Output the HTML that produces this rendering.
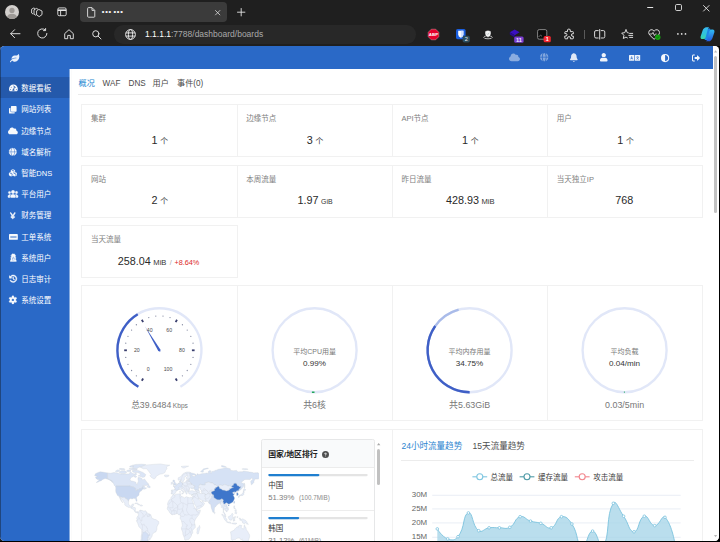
<!DOCTYPE html><html lang="zh-CN"><head><meta charset="utf-8"><title>dashboard</title>
<style>html,body{margin:0;padding:0}body{width:720px;height:542px;overflow:hidden;position:relative;background:#1f1f1f;font-family:"Liberation Sans","Noto Sans CJK SC",sans-serif;}div,svg{box-sizing:border-box}svg{display:block;overflow:visible}.c{position:absolute;border:1px solid #f1f1f1;background:#fff}</style></head><body>
<svg style="position:absolute;left:4.6px;top:4.9px" width="14" height="14" viewBox="0 0 14 14"><defs><clipPath id="av"><circle cx="7" cy="7" r="7"/></clipPath></defs><circle cx="7" cy="7" r="7" fill="#d3d0cd"/><g clip-path="url(#av)" fill="#9d9995"><circle cx="7" cy="5.4" r="2.6"/><ellipse cx="7" cy="12.6" rx="5" ry="3.9"/></g></svg>
<svg style="position:absolute;left:30.6px;top:6.6px" width="12" height="11" viewBox="0 0 12 11" fill="none" stroke="#e4e4e4" stroke-width="0.9" stroke-linejoin="round" stroke-linecap="round"><path d="M8.2 2.6 L11 4 V7.6 L8.2 9.6 L5.6 8 V4.2 Z"/><path d="M6.6 2 L5.4 1.4 L3 2.8 V7 L4.6 8.2"/><path d="M3.6 1.4 L2.8 1 L0.6 2.2 V6 L2 7"/></svg>
<svg style="position:absolute;left:57px;top:7px" width="10" height="10" viewBox="0 0 10 10" fill="none" stroke="#e4e4e4" stroke-width="0.9"><rect x="0.8" y="0.9" width="8.4" height="7.8" rx="1.4"/><path d="M0.8 3.2 H9.2" stroke-width="1.6"/><path d="M3.6 3.2 V8.7"/></svg>
<div style="position:absolute;left:79.80px;top:1.60px;width:147.40px;height:20.90px;background:#3b3b3b;border-radius:4px"></div>
<svg style="position:absolute;left:86.8px;top:6.6px" width="8.4" height="10.8" viewBox="0 0 8.4 10.8" fill="none" stroke="#e4e4e4" stroke-width="0.9" stroke-linejoin="round"><path d="M1.6 0.6 H5 L7.8 3.4 V9.4 Q7.8 10.2 7 10.2 H1.6 Q0.6 10.2 0.6 9.4 V1.6 Q0.6 0.6 1.6 0.6 Z"/><path d="M5 0.8 V3.4 H7.6"/></svg>
<div style="position:absolute;top:2.35px;font-size:13px;line-height:19.5px;color:#f0f0f0;white-space:nowrap;font-weight:bold;left:101.30px;letter-spacing:-0.95px;">···<span style="display:inline-block;width:1.5px"></span>···</div>
<svg style="position:absolute;left:215.1px;top:9.6px" width="5.4" height="5.4" viewBox="0 0 6.4 6.4" stroke="#e4e4e4" stroke-width="0.9" stroke-linecap="round"><path d="M0.6 0.6 L5.8 5.8 M5.8 0.6 L0.6 5.8"/></svg>
<svg style="position:absolute;left:236.6px;top:7.8px" width="8.4" height="8.4" viewBox="0 0 8.4 8.4" stroke="#e4e4e4" stroke-width="0.9" stroke-linecap="round"><path d="M4.2 0.5 V7.9 M0.5 4.2 H7.9"/></svg>
<svg style="position:absolute;left:646.8px;top:7.4px" width="6.4" height="1.2" viewBox="0 0 6.4 1.2"><rect width="6.4" height="1.1" rx="0.5" fill="#e4e4e4"/></svg>
<svg style="position:absolute;left:674.8px;top:4.4px" width="7" height="7" viewBox="0 0 7 7" fill="none" stroke="#e4e4e4" stroke-width="0.9"><rect x="0.5" y="0.5" width="6" height="6" rx="1.2"/></svg>
<svg style="position:absolute;left:703.3px;top:4.8px" width="6.6" height="6.6" viewBox="0 0 6.6 6.6" stroke="#e4e4e4" stroke-width="0.9" stroke-linecap="round"><path d="M0.5 0.5 L6.1 6.1 M6.1 0.5 L0.5 6.1"/></svg>
<svg style="position:absolute;left:10px;top:29.0px" width="10.6" height="9.4" viewBox="0 0 10.6 9.4" fill="none" stroke="#e4e4e4" stroke-width="0.95" stroke-linecap="round" stroke-linejoin="round"><path d="M10 4.7 H0.8 M4.6 0.7 L0.7 4.7 L4.6 8.7"/></svg>
<svg style="position:absolute;left:37.3px;top:28.4px" width="10.8" height="10.8" viewBox="0 0 10.8 10.8" fill="none" stroke="#e4e4e4" stroke-width="0.95" stroke-linecap="round" stroke-linejoin="round"><path d="M9.9 5.4 A4.6 4.6 0 1 1 8.2 1.85"/><path d="M8.6 0.5 V2.6 H6.5" /></svg>
<svg style="position:absolute;left:64.4px;top:28.6px" width="10" height="10.4" viewBox="0 0 10 10.4" fill="none" stroke="#e4e4e4" stroke-width="0.95" stroke-linejoin="round"><path d="M0.7 4.6 L5 0.7 L9.3 4.6 V9.7 H6.3 V6.4 H3.7 V9.7 H0.7 Z"/></svg>
<svg style="position:absolute;left:92px;top:29.6px" width="9.6" height="9.6" viewBox="0 0 9.6 9.6" fill="none" stroke="#e4e4e4" stroke-width="0.95" stroke-linecap="round"><circle cx="3.8" cy="3.8" r="3.1"/><path d="M6.1 6.1 L9 9"/></svg>
<div style="position:absolute;left:114.40px;top:25.30px;width:302.00px;height:18.40px;background:#282828;border-radius:9.2px"></div>
<svg style="position:absolute;left:124.6px;top:28.6px" width="11" height="11" viewBox="0 0 11 11" fill="none" stroke="#f2f2f2" stroke-width="0.9"><circle cx="5.5" cy="5.5" r="4.9"/><ellipse cx="5.5" cy="5.5" rx="2.1" ry="4.9"/><path d="M0.9 3.9 H10.1 M0.9 7.1 H10.1"/></svg>
<div style="position:absolute;top:28.42px;font-size:8.5px;line-height:12.75px;color:#a8a8a8;white-space:nowrap;left:145.00px;"><span style="color:#fff">1.1.1.1</span>:7788/dashboard/boards</div>
<svg style="position:absolute;left:428px;top:28.7px" width="11" height="11" viewBox="0 0 11 11"><path d="M3.3 0.2 H7.7 L10.8 3.3 V7.7 L7.7 10.8 H3.3 L0.2 7.7 V3.3 Z" fill="#e4002b" stroke="#f5b6c0" stroke-width="0.4"/><text x="5.5" y="7.2" font-size="4.4" font-weight="bold" fill="#fff" text-anchor="middle" font-family="Liberation Sans,sans-serif">ABP</text></svg>
<svg style="position:absolute;left:455.6px;top:29px" width="16" height="15" viewBox="0 0 16 15"><rect x="0" y="0" width="9.6" height="10.2" rx="1.6" fill="#1a5fe0"/><path d="M2.2 1.8 H7.4 V5.4 Q7.4 7.6 4.8 8.8 Q2.2 7.6 2.2 5.4 Z" fill="#fff"/><path d="M4.8 1.8 H7.4 V5.4 Q7.4 7.6 4.8 8.8 Z" fill="#cfe0ff"/><rect x="6.6" y="6.8" width="7.2" height="6.6" rx="1.6" fill="#2b4c5c"/><text x="10.2" y="12.1" font-size="5.6" fill="#e8f0f4" text-anchor="middle" font-family="Liberation Sans,sans-serif">2</text></svg>
<svg style="position:absolute;left:482px;top:28.8px" width="12" height="12" viewBox="0 0 12 12"><ellipse cx="6" cy="8.3" rx="4.3" ry="1.5" fill="none" stroke="#d8d8d8" stroke-width="0.8"/><path d="M3 2.2 L6 1.2 L9 2.2 V5 Q9 7.4 6 8.4 Q3 7.4 3 5 Z" fill="#f4f4f4" stroke="#1f1f1f" stroke-width="0.5"/><path d="M4.9 4.6 L5.8 5.5 L7.2 3.8" fill="none" stroke="#9aa" stroke-width="0.6"/></svg>
<svg style="position:absolute;left:509px;top:28.6px" width="16" height="15" viewBox="0 0 16 15"><path d="M5.7 0.6 L10.6 3.3 L5.7 6.2 L0.8 3.3 Z" fill="#3a0fc0"/><path d="M0.8 3.3 L5.7 6.2 V8.4 L0.8 5.4 Z" fill="#2a0a94"/><rect x="5.2" y="7.4" width="9.4" height="6.4" rx="1.5" fill="#7a3fd2"/><text x="9.9" y="12.6" font-size="5.6" font-weight="bold" fill="#f0e8ff" text-anchor="middle" font-family="Liberation Sans,sans-serif">11</text></svg>
<svg style="position:absolute;left:537px;top:29px" width="15" height="14" viewBox="0 0 15 14"><rect x="0.6" y="0.6" width="9.2" height="9.6" rx="1.6" fill="#0c0c0c" stroke="#8e8e8e" stroke-width="0.9"/><path d="M1.6 8 L3.6 6 L5 7.4" fill="none" stroke="#8e8e8e" stroke-width="0.7"/><rect x="6.6" y="7" width="7.2" height="6.2" rx="1.5" fill="#f0252d"/><text x="10.2" y="12" font-size="5.4" font-weight="bold" fill="#fff" text-anchor="middle" font-family="Liberation Sans,sans-serif">1</text></svg>
<svg style="position:absolute;left:564.4px;top:28.4px" width="11" height="11.6" viewBox="0 0 11 11.6" fill="none" stroke="#e4e4e4" stroke-width="0.95" stroke-linejoin="round"><path d="M1.6 3.6 H3.5 Q2.9 1 4.9 1 Q6.9 1 6.3 3.6 H8.6 Q9.4 3.6 9.4 4.4 V5.8 Q7.4 5.2 7.4 7 Q7.4 8.8 9.4 8.2 V10 Q9.4 10.8 8.6 10.8 H6.4 Q7 8.6 5 8.6 Q3 8.6 3.6 10.8 H1.6 Q0.8 10.8 0.8 10 V8 Q3 8.6 3 6.8 Q3 5 0.8 5.6 V4.4 Q0.8 3.6 1.6 3.6 Z"/></svg>
<div style="position:absolute;left:584.40px;top:29.60px;width:0.80px;height:9.60px;background:#5a5a5a"></div>
<svg style="position:absolute;left:594px;top:28.8px" width="11.4" height="10.6" viewBox="0 0 11.4 10.6" fill="none" stroke="#e4e4e4" stroke-width="0.95" stroke-linecap="round"><path d="M4.2 1.6 H2 Q0.6 1.6 0.6 3 V7.6 Q0.6 9 2 9 H4.2 M7.2 1.6 H9.4 Q10.8 1.6 10.8 3 V7.6 Q10.8 9 9.4 9 H7.2 M5.7 0.5 V10.1"/></svg>
<svg style="position:absolute;left:621.4px;top:28.8px" width="12.4" height="11" viewBox="0 0 12.4 11" fill="none" stroke="#e4e4e4" stroke-width="0.95" stroke-linejoin="round" stroke-linecap="round"><path d="M5 0.8 L6.3 3.7 L7.4 3.9 M5 0.8 L3.7 3.7 L0.7 4.1 L2.9 6.3 L2.3 9.5 L5 8.1 L6.4 8.9"/><path d="M8.6 4.4 H11.7 M7.8 6.4 H11.7 M8.6 8.4 H11.7"/></svg>
<svg style="position:absolute;left:648.4px;top:28.9px" width="13" height="12" viewBox="0 0 13 12"><path d="M6.1 2.2 Q4.9 0.5 3.1 0.7 Q0.8 1.1 0.7 3.5 Q0.7 5 2.1 6.5 L6.1 10.3 L10.1 6.5 Q11.5 5 11.5 3.5 Q11.4 1.1 9.1 0.7 Q7.3 0.5 6.1 2.2 Z" fill="none" stroke="#e4e4e4" stroke-width="0.95" stroke-linejoin="round"/><path d="M1.6 5 H4 L5 3.4 L6.4 6.6 L7.3 5 H8.6" fill="none" stroke="#e4e4e4" stroke-width="0.8" stroke-linejoin="round"/><circle cx="9.8" cy="8.3" r="2.7" fill="#13a10e"/><path d="M8.6 8.3 L9.5 9.2 L11 7.5" fill="none" stroke="#0b5a08" stroke-width="0.7"/></svg>
<svg style="position:absolute;left:676.6px;top:33.2px" width="9.4" height="1.8" viewBox="0 0 9.4 1.8" fill="#e4e4e4"><circle cx="0.9" cy="0.9" r="0.85"/><circle cx="4.7" cy="0.9" r="0.85"/><circle cx="8.5" cy="0.9" r="0.85"/></svg>
<svg style="position:absolute;left:700.2px;top:27px" width="15" height="14.6" viewBox="0 0 15 14.6"><defs><linearGradient id="cp1" x1="0" y1="0" x2="0" y2="1"><stop offset="0" stop-color="#36b9f2"/><stop offset="0.55" stop-color="#30c4dc"/><stop offset="1" stop-color="#3ad6a4"/></linearGradient><linearGradient id="cp2" x1="0" y1="0" x2="0" y2="1"><stop offset="0" stop-color="#31bdf2"/><stop offset="1" stop-color="#2458e0"/></linearGradient></defs><path d="M5 1.4 H10 L11 3.6 L9.8 13 H5 L4 11 Z" fill="#1f86e6"/><path d="M4.2 1.2 Q5 0.3 6.4 0.3 H9.2 Q8.1 1 7.7 2.4 L5.6 10.4 Q5.1 12 3.4 12 H2.4 Q0.2 12 0.6 9.4 L2.6 3.4 Q3.2 1.8 4.2 1.2 Z" fill="url(#cp1)"/><path d="M10.8 13.4 Q10 14.3 8.6 14.3 H5.8 Q6.9 13.6 7.3 12.2 L9.4 4.2 Q9.9 2.6 11.6 2.6 H12.6 Q14.8 2.6 14.4 5.2 L12.4 11.2 Q11.8 12.8 10.8 13.4 Z" fill="url(#cp2)"/></svg>
<div style="position:absolute;left:718.4px;top:46px;width:2px;height:496px;background:#000"></div>
<div style="position:absolute;left:0;top:540.8px;width:720px;height:2px;background:#000"></div>
<div id="page" style="position:absolute;left:0px;top:45.7px;width:718.5px;height:495.2px;border-radius:4.5px;overflow:hidden;background:#fff">
<div style="position:absolute;left:0px;top:-45.7px;width:720px;height:542px">
<div style="position:absolute;left:0.00px;top:45.00px;width:712.70px;height:23.80px;background:#2a69c7"></div>
<div style="position:absolute;left:0.00px;top:68.00px;width:69.00px;height:480.00px;background:#2a69c7"></div>
<div style="position:absolute;left:69.00px;top:68.80px;width:1.00px;height:480.00px;background:#86abe0"></div>
<div style="position:absolute;left:0.00px;top:77.40px;width:69.00px;height:20.90px;background:#2459ab"></div>
<div style="position:absolute;left:69.00px;top:77.40px;width:1.00px;height:20.90px;background:#7d9fd4"></div>
<svg style="position:absolute;left:9.93px;top:53.55px;opacity:1" width="9.34" height="8.30" viewBox="0 0 576 512"><path fill="#e9f0fb" fill-rule="evenodd" stroke="#e9f0fb" stroke-width="0" stroke-linejoin="round" d="M546.2 9.7c-5.6-12.5-21.6-13-28.3-1.2C486.9 62.4 431.4 96 368 96h-80C182 96 96 182 96 288c0 7 .8 13.7 1.5 20.5C161.3 262.8 253.4 224 384 224c8.8 0 16 7.2 16 16s-7.2 16-16 16C132.6 256 26 410.1 2.4 468c-6.6 16.3 1.2 34.900 17.5 41.600 16.400 6.800 35-1.100 41.800-17.300 1.500-3.600 20.900-47.900 71.900-90.600 32.400 43.900 94 85.800 174.900 77.200C465.500 467.500 576 326.700 576 154.300c0-50.200-10.800-102.200-29.800-144.600z"/></svg>
<svg style="position:absolute;left:508.50px;top:53.30px;opacity:0.45" width="11.00" height="8.80" viewBox="0 0 640 512"><path fill="#fff" fill-rule="evenodd" stroke="#fff" stroke-width="0" stroke-linejoin="round" d="M537.6 226.6c4.1-10.7 6.4-22.4 6.4-34.6 0-53-43-96-96-96-19.7 0-38.1 6-53.3 16.2C367 64.2 315.3 32 256 32c-88.4 0-160 71.6-160 160 0 2.700.100 5.400.200 8.100C40.200 219.800 0 273.200 0 336c0 79.500 64.500 144 144 144h368c70.700 0 128-57.300 128-128 0-61.900-44-113.600-102.400-125.400z"/></svg>
<svg style="position:absolute;left:539.60px;top:53.40px;opacity:0.42" width="8.40" height="8.40" viewBox="0 0 512 512"><path fill="#fff" fill-rule="evenodd" stroke="#fff" stroke-width="0" stroke-linejoin="round" d="M351.9 280H161c2.9 64.5 17.2 123.9 37.5 167.4 11.4 24.5 23.7 41.8 35.1 52.4 11.2 10.5 18.9 12.2 22.9 12.2s11.7-1.7 22.9-12.2c11.4-10.6 23.7-28 35.1-52.4 20.3-43.5 34.6-102.9 37.5-167.4zm-191-48h190.9c-2.8-64.5-17.1-123.9-37.4-167.4-11.4-24.4-23.7-41.8-35.1-52.4C268.1 1.7 260.4 0 256.4 0s-11.7 1.7-22.9 12.2c-11.4 10.6-23.7 28-35.1 52.4-20.3 43.5-34.6 102.9-37.5 167.4m-48 0c3.5-85.6 25.6-165.1 57.9-217.3C78.7 47.3 10.9 131.2 1.5 232zM1.5 280c9.4 100.8 77.2 184.7 169.3 217.3-32.3-52.2-54.4-131.7-57.9-217.3zm398.4 0c-3.5 85.6-25.6 165.1-57.9 217.3 92.1-32.7 159.9-116.5 169.3-217.3zm111.4-48C501.9 131.2 434.1 47.3 342 14.7c32.3 52.2 54.4 131.7 57.9 217.3z"/></svg>
<svg style="position:absolute;left:569.85px;top:53.20px;opacity:0.85" width="7.70" height="8.80" viewBox="0 0 448 512"><path fill="#fff" fill-rule="evenodd" stroke="#fff" stroke-width="0" stroke-linejoin="round" d="M224 0c-17.7 0-32 14.3-32 32v3.2C119 50 64 114.6 64 192v21.7c0 48.1-16.4 94.8-46.4 132.4l-9.8 12.2C2.7 364.6 0 372.4 0 380.5 0 400.1 15.9 416 35.5 416h376.9c19.6 0 35.5-15.9 35.5-35.5 0-8.1-2.7-15.9-7.8-22.2l-9.8-12.2c-29.9-37.6-46.3-84.3-46.3-132.4V192c0-77.4-55-142-128-156.8V32c0-17.7-14.3-32-32-32m-62 464c7.1 27.6 32.2 48 62 48s54.9-20.4 62-48z"/></svg>
<svg style="position:absolute;left:599.94px;top:53.20px;opacity:0.92" width="7.52" height="8.60" viewBox="0 0 448 512"><path fill="#fff" fill-rule="evenodd" stroke="#fff" stroke-width="0" stroke-linejoin="round" d="M224 256c70.700 0 128-57.300 128-128S294.700 0 224 0 96 57.300 96 128s57.300 128 128 128zm89.600 32h-16.700c-22.200 10.200-46.900 16-72.900 16s-50.600-5.800-72.900-16h-16.700C60.200 288 0 348.200 0 422.400V464c0 26.500 21.500 48 48 48h352c26.500 0 48-21.500 48-48v-41.600c0-74.200-60.200-134.400-134.400-134.400z"/></svg>
<svg style="position:absolute;left:629.2px;top:54.7px;opacity:.92" width="11.2" height="5.8" viewBox="0 0 11.2 5.8"><rect x="0" y="0" width="5.3" height="5.8" rx="0.5" fill="#fff"/><rect x="5.9" y="0" width="5.3" height="5.8" rx="0.5" fill="#fff"/><path d="M1.7 4.4 L2.65 1.5 L3.6 4.4 M2 3.5 H3.3" stroke="#2a69c7" stroke-width="0.6" fill="none"/><path d="M7.2 2.1 H9.9 M8.55 1.3 V2.1 M7.5 4.5 Q9 3.8 9.4 2.1 M7.8 2.8 Q8.5 4 9.9 4.5" stroke="#2a69c7" stroke-width="0.55" fill="none"/></svg>
<svg style="position:absolute;left:661.10px;top:53.50px;opacity:0.95" width="8.20" height="8.20" viewBox="0 0 512 512"><path fill="#fff" fill-rule="evenodd" stroke="#fff" stroke-width="0" stroke-linejoin="round" d="M448 256c0-106-86-192-192-192v384c106 0 192-86 192-192M0 256a256 256 0 1 1 512 0 256 256 0 1 1-512 0"/></svg>
<svg style="position:absolute;left:691.60px;top:53.60px;opacity:0.95" width="8.00" height="8.00" viewBox="0 0 512 512"><path fill="#fff" fill-rule="evenodd" stroke="#fff" stroke-width="0" stroke-linejoin="round" d="M505 273c9.4-9.4 9.4-24.6 0-33.9L361 95c-6.9-6.9-17.2-8.9-26.2-5.2S320 102.3 320 112v80H208c-26.5 0-48 21.5-48 48v32c0 26.5 21.5 48 48 48h112v80c0 9.7 5.8 18.5 14.8 22.2s19.3 1.7 26.2-5.2zM160 96c17.7 0 32-14.3 32-32s-14.3-32-32-32H96C43 32 0 75 0 128v256c0 53 43 96 96 96h64c17.7 0 32-14.3 32-32s-14.3-32-32-32H96c-17.7 0-32-14.3-32-32V128c0-17.7 14.3-32 32-32z"/></svg>
<svg style="position:absolute;left:8.78px;top:84.28px;opacity:0.96" width="8.83" height="7.85" viewBox="0 0 576 512"><path fill="#fff" fill-rule="evenodd" stroke="#fff" stroke-width="0" stroke-linejoin="round" d="M288 32C128.940 32 0 160.940 0 320c0 52.800 14.250 102.260 39.060 144.800 5.610 9.620 16.300 15.200 27.440 15.200h443c11.140 0 21.830-5.580 27.440-15.200C561.750 422.260 576 372.800 576 320c0-159.060-128.940-288-288-288zM288 96a32 32 0 1 1 0 64 32 32 0 1 1 0-64zM96 384a32 32 0 1 1 0-64 32 32 0 1 1 0 64zM144 240a32 32 0 1 1 0-64 32 32 0 1 1 0 64zM393.150 167.500L331.810 351.500C346.670 363.230 356.410 381.200 356.410 401.600c0 11.720-3.380 22.550-8.880 32H228.470c-5.500-9.450-8.880-20.280-8.880-32 0-33.940 26.500-61.430 59.900-63.590l61.340-184.010c4.170-12.560 17.730-19.450 30.360-15.170 12.570 4.190 19.350 17.790 15.160 30.370zM432 240a32 32 0 1 1 0-64 32 32 0 1 1 0 64zM480 384a32 32 0 1 1 0-64 32 32 0 1 1 0 64z"/></svg>
<div style="position:absolute;top:83.18px;font-size:7.5px;line-height:11.25px;color:#fff;white-space:nowrap;left:21.30px;">数据看板</div>
<svg style="position:absolute;left:9.40px;top:105.60px;opacity:0.96" width="7.60" height="7.60" viewBox="0 0 512 512"><path fill="#fff" fill-rule="evenodd" stroke="#fff" stroke-width="0" stroke-linejoin="round" d="M464 0c26.510 0 48 21.490 48 48v288c0 26.510-21.490 48-48 48H176c-26.510 0-48-21.490-48-48V48c0-26.510 21.490-48 48-48h288M176 416c-44.112 0-80-35.888-80-80V128H48c-26.510 0-48 21.490-48 48v288c0 26.510 21.490 48 48 48h288c26.510 0 48-21.490 48-48v-48H176z"/></svg>
<div style="position:absolute;top:104.38px;font-size:7.5px;line-height:11.25px;color:#fff;white-space:nowrap;left:21.30px;">网站列表</div>
<svg style="position:absolute;left:8.29px;top:126.68px;opacity:0.96" width="9.81" height="7.85" viewBox="0 0 640 512"><path fill="#fff" fill-rule="evenodd" stroke="#fff" stroke-width="0" stroke-linejoin="round" d="M537.6 226.6c4.1-10.7 6.4-22.4 6.4-34.6 0-53-43-96-96-96-19.7 0-38.1 6-53.3 16.2C367 64.2 315.3 32 256 32c-88.4 0-160 71.6-160 160 0 2.700.100 5.400.200 8.100C40.200 219.800 0 273.200 0 336c0 79.500 64.500 144 144 144h368c70.700 0 128-57.300 128-128 0-61.900-44-113.600-102.400-125.400z"/></svg>
<div style="position:absolute;top:125.58px;font-size:7.5px;line-height:11.25px;color:#fff;white-space:nowrap;left:21.30px;">边缘节点</div>
<svg style="position:absolute;left:9.40px;top:148.00px;opacity:0.96" width="7.60" height="7.60" viewBox="0 0 512 512"><path fill="#fff" fill-rule="evenodd" stroke="#fff" stroke-width="22" stroke-linejoin="round" d="M351.9 280H161c2.9 64.5 17.2 123.9 37.5 167.4 11.4 24.5 23.7 41.8 35.1 52.4 11.2 10.5 18.9 12.2 22.9 12.2s11.7-1.7 22.9-12.2c11.4-10.6 23.7-28 35.1-52.4 20.3-43.5 34.6-102.9 37.5-167.4zm-191-48h190.9c-2.8-64.5-17.1-123.9-37.4-167.4-11.4-24.4-23.7-41.8-35.1-52.4C268.1 1.7 260.4 0 256.4 0s-11.7 1.7-22.9 12.2c-11.4 10.6-23.7 28-35.1 52.4-20.3 43.5-34.6 102.9-37.5 167.4m-48 0c3.5-85.6 25.6-165.1 57.9-217.3C78.7 47.3 10.9 131.2 1.5 232zM1.5 280c9.4 100.8 77.2 184.7 169.3 217.3-32.3-52.2-54.4-131.7-57.9-217.3zm398.4 0c-3.5 85.6-25.6 165.1-57.9 217.3 92.1-32.7 159.9-116.5 169.3-217.3zm111.4-48C501.9 131.2 434.1 47.3 342 14.7c32.3 52.2 54.4 131.7 57.9 217.3z"/></svg>
<div style="position:absolute;top:146.78px;font-size:7.5px;line-height:11.25px;color:#fff;white-space:nowrap;left:21.30px;">域名解析</div>
<svg style="position:absolute;left:9.27px;top:169.07px;opacity:0.96" width="7.85" height="7.85" viewBox="0 0 512 512"><path fill="#fff" fill-rule="evenodd" stroke="#fff" stroke-width="14" stroke-linejoin="round" d="M488.600 250.200L392 214V105.500c0-15-9.300-28.400-23.400-33.700l-100-37.500c-8.100-3.100-17.100-3.100-25.300 0l-100 37.500c-14.100 5.300-23.400 18.700-23.400 33.700V214l-96.600 36.200C9.300 255.500 0 268.900 0 283.900V394c0 13.600 7.700 26.100 19.900 32.200l100 50c10.100 5.100 22.100 5.100 32.200 0l103.900-52 103.900 52c10.100 5.100 22.100 5.100 32.200 0l100-50c12.200-6.100 19.900-18.600 19.900-32.200V283.900c0-15-9.300-28.400-23.400-33.700zM358 214.800l-85 31.900v-68.200l85-37v73.300zM154 104.100l102-38.200 102 38.200v.6l-102 41.400-102-41.400v-.6zm84 291.100l-85 42.500v-79.100l85-38.800v75.400zm0-112l-102 41.400-102-41.400v-.6l102-38.200 102 38.200v.6zm240 112l-85 42.500v-79.100l85-38.800v75.400zm0-112l-102 41.400-102-41.400v-.6l102-38.200 102 38.200v.6z"/></svg>
<div style="position:absolute;top:167.97px;font-size:7.5px;line-height:11.25px;color:#fff;white-space:nowrap;left:21.30px;">智能DNS</div>
<svg style="position:absolute;left:8.20px;top:190.20px;opacity:0.96" width="10.00" height="8.00" viewBox="0 0 640 512"><path fill="#fff" fill-rule="evenodd" stroke="#fff" stroke-width="30" stroke-linejoin="round" d="M320 16a104 104 0 1 1 0 208 104 104 0 1 1 0-208M96 88a72 72 0 1 1 0 144 72 72 0 1 1 0-144M0 416c0-70.7 57.3-128 128-128 12.8 0 25.2 1.9 36.9 5.4C132 330.2 112 378.8 112 432v16c0 11.4 2.4 22.2 6.7 32H32c-17.7 0-32-14.3-32-32zm521.3 64c4.3-9.8 6.7-20.6 6.7-32v-16c0-53.2-20-101.8-52.9-138.6 11.7-3.5 24.1-5.4 36.9-5.4 70.7 0 128 57.3 128 128v32c0 17.7-14.3 32-32 32zM472 160a72 72 0 1 1 144 0 72 72 0 1 1-144 0M160 432c0-88.4 71.6-160 160-160s160 71.6 160 160v16c0 17.7-14.3 32-32 32H192c-17.7 0-32-14.3-32-32z"/></svg>
<div style="position:absolute;top:189.18px;font-size:7.5px;line-height:11.25px;color:#fff;white-space:nowrap;left:21.30px;">平台用户</div>
<svg style="position:absolute;left:10.42px;top:211.70px;opacity:0.96" width="5.55" height="7.40" viewBox="0 0 384 512"><path fill="#fff" fill-rule="evenodd" stroke="#fff" stroke-width="36" stroke-linejoin="round" d="M74.9 46.7c-9.6-14.9-29.4-19.2-44.2-9.6s-19.2 29.3-9.6 44.2L143.7 272H88c-13.3 0-24 10.7-24 24s10.7 24 24 24h72v32H88c-13.3 0-24 10.7-24 24s10.7 24 24 24h72v48c0 17.7 14.3 32 32 32s32-14.3 32-32v-48h72c13.3 0 24-10.7 24-24s-10.7-24-24-24h-72v-32h72c13.3 0 24-10.7 24-24s-10.7-24-24-24h-55.7L362.9 81.3c9.6-14.9 5.3-34.7-9.6-44.2s-34.7-5.3-44.2 9.6L192 228.8z"/></svg>
<div style="position:absolute;top:210.38px;font-size:7.5px;line-height:11.25px;color:#fff;white-space:nowrap;left:21.30px;">财务管理</div>
<svg style="position:absolute;left:8.78px;top:232.68px;opacity:0.96" width="8.83" height="7.85" viewBox="0 0 576 512"><path fill="#fff" fill-rule="evenodd" stroke="#fff" stroke-width="0" stroke-linejoin="round" d="M48 64h480q48 0 48 48v288q0 48-48 48H48q-48 0-48-48V112q0-48 48-48z M84 222h408v68H84z"/></svg>
<div style="position:absolute;top:231.58px;font-size:7.5px;line-height:11.25px;color:#fff;white-space:nowrap;left:21.30px;">工单系统</div>
<svg style="position:absolute;left:9.88px;top:254.00px;opacity:0.96" width="6.65" height="7.60" viewBox="0 0 448 512"><path fill="#fff" fill-rule="evenodd" stroke="#fff" stroke-width="26" stroke-linejoin="round" d="M171-16c-36.4 0-57.8 58.3-68.3 112H72c-13.3 0-24 10.7-24 24s10.7 24 24 24h24v32c0 17 3.3 33.2 9.3 48H75.5C60.3 224 48 236.3 48 251.5c0 3 .5 5.9 1.4 8.7l28.9 86.6C40.2 379.6 16 428.1 16 482.3c0 16.4 13.3 29.7 29.7 29.7h356.6c16.4 0 29.7-13.3 29.7-29.7 0-54.2-24.2-102.7-62.3-135.4l28.9-86.6c.9-2.8 1.4-5.7 1.4-8.7 0-15.2-12.3-27.5-27.5-27.5h-29.8c6-14.8 9.3-31 9.3-48v-32h24c13.3 0 24-10.7 24-24s-10.7-24-24-24h-30.7c-10.4-53.7-31.9-112-68.3-112-9.6 0-19 3.9-27.5 8.2C241.3-3.6 231.1.1 224 .1s-17.3-3.7-25.5-7.8C190-12.1 180.6-16 171-16m93.7 484.4-24.8-70.9 27.9-32.5c2.7-3.2 4.2-7.2 4.2-11.4 0-9.7-7.8-17.5-17.5-17.5h-61c-9.7 0-17.5 7.8-17.5 17.5 0 4.2 1.5 8.2 4.2 11.4l27.9 32.5-24.8 70.9-57-180.4H162c18.4 10.2 39.5 16 62 16s43.6-5.8 62-16h35.7zM224 256c-34.7 0-64.2-22.1-75.3-53 5.7 3.2 12.3 5 19.3 5h12.4c16.5 0 31.1-10.6 36.3-26.2 2.3-7 12.2-7 14.5 0 5.2 15.6 19.9 26.2 36.3 26.2h12.4c7 0 13.6-1.8 19.3-5-11.1 30.9-40.6 53-75.3 53z"/></svg>
<div style="position:absolute;top:252.77px;font-size:7.5px;line-height:11.25px;color:#fff;white-space:nowrap;left:21.30px;">系统用户</div>
<svg style="position:absolute;left:9.04px;top:275.30px;opacity:0.96" width="8.33" height="7.40" viewBox="0 0 576 512"><path fill="#fff" fill-rule="evenodd" stroke="#fff" stroke-width="30" stroke-linejoin="round" d="M288 64c106 0 192 86 192 192s-86 192-192 192c-65.2 0-122.9-32.5-157.6-82.3-10.1-14.5-30.1-18-44.6-7.9s-18 30.1-7.9 44.6C124.1 468.6 201 512 288 512c141.4 0 256-114.6 256-256S429.4 0 288 0C202.3 0 126.5 42.1 80 106.7V80c0-17.7-14.3-32-32-32S16 62.3 16 80v112c0 17.7 14.3 32 32 32h112.1c17.7 0 32-14.3 32-32s-14.3-32-32-32h-38.3C154.9 102.6 217 64 288 64m24 88c0-13.3-10.7-24-24-24s-24 10.7-24 24v104c0 6.4 2.5 12.5 7 17l72 72c9.4 9.4 24.6 9.4 33.9 0s9.4-24.6 0-33.9l-65-65V152z"/></svg>
<div style="position:absolute;top:273.97px;font-size:7.5px;line-height:11.25px;color:#fff;white-space:nowrap;left:21.30px;">日志审计</div>
<svg style="position:absolute;left:9.30px;top:296.30px;opacity:0.96" width="7.80" height="7.80" viewBox="0 0 512 512"><path fill="#fff" fill-rule="evenodd" stroke="#fff" stroke-width="16" stroke-linejoin="round" d="M195.1 9.5c3-14.8 16.1-25.5 31.3-25.5h59.8c15.2 0 28.3 10.7 31.3 25.5l14.5 70c14.1 6 27.3 13.7 39.3 22.8l67.8-22.5c14.4-4.8 30.2 1.2 37.8 14.4l29.9 51.8c7.6 13.2 4.9 29.8-6.5 39.9L447 233.3c.9 7.4 1.3 15 1.3 22.7s-.5 15.3-1.3 22.7l53.4 47.5c11.4 10.1 14 26.8 6.5 39.9L477 417.9c-7.6 13.1-23.4 19.2-37.8 14.4l-67.8-22.5c-12.1 9.1-25.3 16.7-39.3 22.8l-14.4 69.9c-3.1 14.9-16.2 25.5-31.3 25.5h-59.8c-15.2 0-28.3-10.7-31.3-25.5l-14.4-69.9c-14.1-6-27.2-13.7-39.3-22.8l-68.1 22.5c-14.4 4.8-30.2-1.2-37.8-14.4L5.8 366.1c-7.6-13.2-4.9-29.8 6.5-39.9l53.4-47.5c-.9-7.4-1.3-15-1.3-22.7s.5-15.3 1.3-22.7l-53.4-47.5C.9 175.7-1.7 159 5.8 145.9l29.9-51.8c7.6-13.2 23.4-19.2 37.8-14.4l67.8 22.5c12.1-9.1 25.3-16.7 39.3-22.8zM256.3 336a80 80 0 1 0-.6-160 80 80 0 1 0 .6 160"/></svg>
<div style="position:absolute;top:295.17px;font-size:7.5px;line-height:11.25px;color:#fff;white-space:nowrap;left:21.30px;">系统设置</div>
<div style="position:absolute;left:71.40px;top:69.00px;width:0.70px;height:480.00px;background:#fbfbfb"></div>
<div style="position:absolute;top:77.69px;font-size:8.15px;line-height:12.23px;color:#2185d0;white-space:nowrap;left:78.50px;">概况</div>
<div style="position:absolute;top:77.69px;font-size:8.15px;line-height:12.23px;color:#4a4a4a;white-space:nowrap;left:102.60px;">WAF</div>
<div style="position:absolute;top:77.69px;font-size:8.15px;line-height:12.23px;color:#4a4a4a;white-space:nowrap;left:128.60px;">DNS</div>
<div style="position:absolute;top:77.69px;font-size:8.15px;line-height:12.23px;color:#4a4a4a;white-space:nowrap;left:152.60px;">用户</div>
<div style="position:absolute;top:77.69px;font-size:8.15px;line-height:12.23px;color:#4a4a4a;white-space:nowrap;left:177.10px;">事件(0)</div>
<div style="position:absolute;left:78.30px;top:94.00px;width:624.20px;height:0.90px;background:#ebebeb"></div>
<div class="c" style="left:81.40px;top:104.00px;width:156.17px;height:53.2px"></div>
<div style="position:absolute;top:113.28px;font-size:7.5px;line-height:11.25px;color:#808080;white-space:nowrap;left:91.00px;">集群</div>
<div style="position:absolute;top:132.40px;font-size:10.8px;line-height:16px;color:#222;white-space:nowrap;left:82.10px;width:155.27px;text-align:center;"><span style="font-size:10.8px;color:#2a2a2a">1</span><span style="font-size:7.8px;color:#333;margin-left:2.6px">个</span></div>
<div class="c" style="left:236.67px;top:104.00px;width:156.17px;height:53.2px"></div>
<div style="position:absolute;top:113.28px;font-size:7.5px;line-height:11.25px;color:#808080;white-space:nowrap;left:246.27px;">边缘节点</div>
<div style="position:absolute;top:132.40px;font-size:10.8px;line-height:16px;color:#222;white-space:nowrap;left:237.37px;width:155.27px;text-align:center;"><span style="font-size:10.8px;color:#2a2a2a">3</span><span style="font-size:7.8px;color:#333;margin-left:2.6px">个</span></div>
<div class="c" style="left:391.94px;top:104.00px;width:156.17px;height:53.2px"></div>
<div style="position:absolute;top:113.28px;font-size:7.5px;line-height:11.25px;color:#808080;white-space:nowrap;left:401.54px;">API节点</div>
<div style="position:absolute;top:132.40px;font-size:10.8px;line-height:16px;color:#222;white-space:nowrap;left:392.64px;width:155.27px;text-align:center;"><span style="font-size:10.8px;color:#2a2a2a">1</span><span style="font-size:7.8px;color:#333;margin-left:2.6px">个</span></div>
<div class="c" style="left:547.21px;top:104.00px;width:156.17px;height:53.2px"></div>
<div style="position:absolute;top:113.28px;font-size:7.5px;line-height:11.25px;color:#808080;white-space:nowrap;left:556.81px;">用户</div>
<div style="position:absolute;top:132.40px;font-size:10.8px;line-height:16px;color:#222;white-space:nowrap;left:547.91px;width:155.27px;text-align:center;"><span style="font-size:10.8px;color:#2a2a2a">1</span><span style="font-size:7.8px;color:#333;margin-left:2.6px">个</span></div>
<div class="c" style="left:81.40px;top:164.60px;width:156.17px;height:53.2px"></div>
<div style="position:absolute;top:173.88px;font-size:7.5px;line-height:11.25px;color:#808080;white-space:nowrap;left:91.00px;">网站</div>
<div style="position:absolute;top:192.40px;font-size:10.8px;line-height:16px;color:#222;white-space:nowrap;left:82.10px;width:155.27px;text-align:center;"><span style="font-size:10.8px;color:#2a2a2a">2</span><span style="font-size:7.8px;color:#333;margin-left:2.6px">个</span></div>
<div class="c" style="left:236.67px;top:164.60px;width:156.17px;height:53.2px"></div>
<div style="position:absolute;top:173.88px;font-size:7.5px;line-height:11.25px;color:#808080;white-space:nowrap;left:246.27px;">本周流量</div>
<div style="position:absolute;top:192.40px;font-size:10.8px;line-height:16px;color:#222;white-space:nowrap;left:237.37px;width:155.27px;text-align:center;"><span style="font-size:10.8px;color:#2a2a2a">1.97</span><span style="font-size:6.9px;color:#333;margin-left:2.6px">GiB</span></div>
<div class="c" style="left:391.94px;top:164.60px;width:156.17px;height:53.2px"></div>
<div style="position:absolute;top:173.88px;font-size:7.5px;line-height:11.25px;color:#808080;white-space:nowrap;left:401.54px;">昨日流量</div>
<div style="position:absolute;top:192.40px;font-size:10.8px;line-height:16px;color:#222;white-space:nowrap;left:392.64px;width:155.27px;text-align:center;"><span style="font-size:10.8px;color:#2a2a2a">428.93</span><span style="font-size:7.6px;color:#333;margin-left:2.6px">MiB</span></div>
<div class="c" style="left:547.21px;top:164.60px;width:156.17px;height:53.2px"></div>
<div style="position:absolute;top:173.88px;font-size:7.5px;line-height:11.25px;color:#808080;white-space:nowrap;left:556.81px;">当天独立IP</div>
<div style="position:absolute;top:192.40px;font-size:10.8px;line-height:16px;color:#222;white-space:nowrap;left:546.61px;width:155.27px;text-align:center;"><span style="font-size:10.8px;color:#2a2a2a">768</span></div>
<div class="c" style="left:81.40px;top:225.00px;width:156.17px;height:53.2px"></div>
<div style="position:absolute;top:234.28px;font-size:7.5px;line-height:11.25px;color:#808080;white-space:nowrap;left:91.00px;">当天流量</div>
<div style="position:absolute;top:253.20px;font-size:10.8px;line-height:16px;color:#222;white-space:nowrap;left:80.90px;width:155.27px;text-align:center;"><span style="font-size:10.8px;color:#2a2a2a">258.04</span><span style="font-size:7.6px;color:#333;margin-left:2.6px">MiB</span><span style="font-size:7.2px;color:#aaa;margin-left:3.4px">/</span><span style="font-size:7.3px;color:#db2828;margin-left:2.6px">+8.64%</span></div>
<div style="position:absolute;left:712.70px;top:45.00px;width:6.00px;height:500.00px;background:#fff"></div>
<svg style="position:absolute;left:714px;top:49.6px" width="3.2" height="2.4" viewBox="0 0 3.2 2.4"><path d="M0 2.4 L1.6 0.2 L3.2 2.4 Z" fill="#b9b9b9"/></svg>
<div style="position:absolute;left:713.90px;top:55.60px;width:3.30px;height:157.60px;background:#c2c2c2;border-radius:1.6px"></div>
<svg style="position:absolute;left:714px;top:535px" width="3.2" height="2.4" viewBox="0 0 3.2 2.4"><path d="M0 0 L1.6 2.2 L3.2 0 Z" fill="#b9b9b9"/></svg>
<div class="c" style="left:81.4px;top:285.4px;width:621.98px;height:135.4px"></div>
<div style="position:absolute;left:236.67px;top:285.40px;width:0.90px;height:135.40px;background:#f1f1f1"></div>
<div style="position:absolute;left:391.94px;top:285.40px;width:0.90px;height:135.40px;background:#f1f1f1"></div>
<div style="position:absolute;left:547.21px;top:285.40px;width:0.90px;height:135.40px;background:#f1f1f1"></div>
<svg style="position:absolute;left:0;top:0" width="720" height="542" viewBox="0 0 720 542"><path d="M138.40 386.67 A42 42 0 1 1 180.40 386.67" fill="none" stroke="#e1e7f8" stroke-width="2.35"/><path d="M138.40 386.67 A42 42 0 0 1 137.73 314.32" fill="none" stroke="#3f5fc6" stroke-width="2.35"/><path d="M141.80 380.78 L143.15 378.45" stroke="#3a3f6e" stroke-width="1.8"/><circle cx="136.38" cy="375.86" r="0.65" fill="#858ba2"/><circle cx="131.57" cy="370.52" r="0.65" fill="#858ba2"/><circle cx="127.97" cy="364.29" r="0.65" fill="#858ba2"/><circle cx="125.75" cy="357.45" r="0.65" fill="#858ba2"/><path d="M124.20 350.30 L126.90 350.30" stroke="#3a3f6e" stroke-width="1.8"/><circle cx="125.75" cy="343.15" r="0.65" fill="#858ba2"/><circle cx="127.97" cy="336.31" r="0.65" fill="#858ba2"/><circle cx="131.57" cy="330.08" r="0.65" fill="#858ba2"/><circle cx="136.38" cy="324.74" r="0.65" fill="#858ba2"/><path d="M141.80 319.82 L143.15 322.15" stroke="#3a3f6e" stroke-width="1.8"/><circle cx="148.77" cy="317.58" r="0.65" fill="#858ba2"/><circle cx="155.80" cy="316.09" r="0.65" fill="#858ba2"/><circle cx="163.00" cy="316.09" r="0.65" fill="#858ba2"/><circle cx="170.03" cy="317.58" r="0.65" fill="#858ba2"/><path d="M177.00 319.82 L175.65 322.15" stroke="#3a3f6e" stroke-width="1.8"/><circle cx="182.42" cy="324.74" r="0.65" fill="#858ba2"/><circle cx="187.23" cy="330.08" r="0.65" fill="#858ba2"/><circle cx="190.83" cy="336.31" r="0.65" fill="#858ba2"/><circle cx="193.05" cy="343.15" r="0.65" fill="#858ba2"/><path d="M194.60 350.30 L191.90 350.30" stroke="#3a3f6e" stroke-width="1.8"/><circle cx="193.05" cy="357.45" r="0.65" fill="#858ba2"/><circle cx="190.83" cy="364.29" r="0.65" fill="#858ba2"/><circle cx="187.23" cy="370.52" r="0.65" fill="#858ba2"/><circle cx="182.42" cy="375.86" r="0.65" fill="#858ba2"/><path d="M177.00 380.78 L175.65 378.45" stroke="#3a3f6e" stroke-width="1.8"/><text x="148.10" y="371.00" font-size="5.2" fill="#4a4a4a" text-anchor="middle">0</text><text x="136.80" y="351.90" font-size="5.2" fill="#4a4a4a" text-anchor="middle">20</text><text x="149.70" y="332.10" font-size="5.2" fill="#4a4a4a" text-anchor="middle">40</text><text x="169.20" y="332.10" font-size="5.2" fill="#4a4a4a" text-anchor="middle">60</text><text x="182.00" y="351.90" font-size="5.2" fill="#4a4a4a" text-anchor="middle">80</text><text x="168.00" y="371.00" font-size="5.2" fill="#4a4a4a" text-anchor="middle">100</text><path d="M145.06 326.48 L158.29 350.97 L160.23 351.67 L160.51 349.63 Z" fill="#3f5fc6"/><circle cx="314.6" cy="350.2" r="42" fill="none" stroke="#e1e7f8" stroke-width="2.35"/><circle cx="469.6" cy="350.2" r="42" fill="none" stroke="#e1e7f8" stroke-width="2.35"/><path d="M469.60 392.20 A42 42 0 0 1 458.64 309.65" fill="none" stroke="#a9bbe9" stroke-width="2.35"/><path d="M469.60 392.20 A42 42 0 0 1 435.24 326.05" fill="none" stroke="#3f5fc6" stroke-width="2.35"/><circle cx="624.6" cy="350.2" r="42" fill="none" stroke="#e1e7f8" stroke-width="2.35"/><rect x="311.9" y="391.5" width="2.6" height="1.5" fill="#21a85a"/><rect x="623.9" y="391.4" width="0.9" height="1.5" fill="#3fb27a"/></svg>
<div style="position:absolute;top:398.98px;font-size:8.7px;line-height:13.05px;color:#777777;white-space:nowrap;left:59.50px;width:200px;text-align:center;">总39.6484<span style="font-size:6.6px;margin-left:1.6px">Kbps</span></div>
<div style="position:absolute;top:346.65px;font-size:7.0px;line-height:10.5px;color:#7a7a7a;white-space:nowrap;left:214.60px;width:200px;text-align:center;">平均CPU用量</div>
<div style="position:absolute;top:358.12px;font-size:8.1px;line-height:12.15px;color:#333;white-space:nowrap;left:214.60px;width:200px;text-align:center;">0.99%</div>
<div style="position:absolute;top:398.82px;font-size:8.9px;line-height:13.35px;color:#777777;white-space:nowrap;left:214.60px;width:200px;text-align:center;">共6核</div>
<div style="position:absolute;top:346.65px;font-size:7.0px;line-height:10.5px;color:#7a7a7a;white-space:nowrap;left:369.60px;width:200px;text-align:center;">平均内存用量</div>
<div style="position:absolute;top:358.12px;font-size:8.1px;line-height:12.15px;color:#333;white-space:nowrap;left:369.60px;width:200px;text-align:center;">34.75%</div>
<div style="position:absolute;top:398.82px;font-size:8.9px;line-height:13.35px;color:#777777;white-space:nowrap;left:369.60px;width:200px;text-align:center;">共5.63GiB</div>
<div style="position:absolute;top:346.65px;font-size:7.0px;line-height:10.5px;color:#7a7a7a;white-space:nowrap;left:524.60px;width:200px;text-align:center;">平均负载</div>
<div style="position:absolute;top:358.12px;font-size:8.1px;line-height:12.15px;color:#333;white-space:nowrap;left:524.60px;width:200px;text-align:center;">0.04/min</div>
<div style="position:absolute;top:398.82px;font-size:8.9px;line-height:13.35px;color:#777777;white-space:nowrap;left:524.60px;width:200px;text-align:center;">0.03/5min</div>
<div class="c" style="left:81.4px;top:428.8px;width:621.98px;height:200px"></div>
<div style="position:absolute;left:392.10px;top:428.80px;width:0.90px;height:200.00px;background:#f1f1f1"></div>
<svg style="position:absolute;left:0;top:0;overflow:hidden" width="258.9" height="542" viewBox="0 0 258.9 542"><g stroke="#c9ced7" stroke-width="0.32" stroke-linejoin="round"><path d="M94.6 475.5 L95.5 473.7 L97.0 472.9 L100.1 471.8 L102.3 472.1 L107.6 472.9 L107.6 478.9 L108.6 478.9 L109.3 479.6 L111.2 480.0 L112.7 481.6 L112.9 482.4 L111.9 482.1 L111.0 480.7 L109.5 480.0 L108.1 479.2 L105.2 478.5 L103.7 479.1 L102.3 479.7 L101.3 480.7 L99.4 481.3 L97.5 482.3 L96.2 482.5 L98.4 480.7 L99.6 479.8 L97.5 479.4 L96.0 478.4 L95.5 477.1 L97.9 476.5 L96.0 476.1Z" fill="#c9d8f1"/><path d="M107.6 472.9 L110.5 473.3 L113.9 472.5 L117.7 473.0 L120.2 473.9 L123.5 473.9 L126.4 473.9 L129.3 473.9 L130.3 471.5 L132.2 473.3 L134.2 473.9 L136.1 472.9 L136.6 474.6 L134.2 475.2 L133.2 476.5 L130.8 477.8 L130.1 479.7 L131.0 481.0 L133.2 481.3 L135.9 482.2 L136.1 483.6 L137.3 484.7 L137.6 482.9 L138.5 481.0 L138.0 479.7 L138.0 477.6 L140.0 477.6 L141.9 478.4 L142.1 479.8 L143.8 479.4 L144.5 478.9 L145.8 480.7 L146.7 482.0 L148.2 483.6 L148.7 484.2 L147.7 484.9 L146.2 485.4 L143.8 485.4 L142.6 486.1 L144.3 486.1 L144.5 487.1 L146.0 488.1 L146.7 487.8 L146.2 488.5 L144.8 489.0 L143.8 489.5 L143.7 488.7 L143.2 488.6 L143.0 487.4 L142.3 487.2 L141.5 488.5 L139.6 488.7 L138.8 489.4 L137.5 489.7 L137.5 490.1 L135.9 490.7 L135.6 488.2 L134.7 487.8 L133.0 486.7 L132.2 486.8 L129.8 486.1 L116.3 486.1 L115.6 486.5 L114.1 485.2 L113.9 484.2 L112.9 482.4 L112.7 481.6 L111.2 480.0 L109.3 479.6 L108.6 478.9 L107.6 478.9Z" fill="#dbe5f6"/><path d="M147.2 487.0 L148.7 487.6 L150.1 487.7 L150.2 486.5 L148.9 485.6 L148.7 484.5 L147.9 485.2Z" fill="#dbe5f6"/><path d="M137.1 470.4 L139.0 470.8 L142.9 472.4 L145.8 474.6 L144.8 476.8 L142.9 477.5 L141.4 476.8 L139.5 476.2 L138.0 476.0 L140.2 474.9 L140.4 473.8 L137.8 472.6 L134.6 472.6 L132.7 472.0 L132.5 470.4 L134.6 470.3Z" fill="#dbe5f6"/><path d="M119.2 471.7 L121.6 470.7 L125.0 470.7 L126.7 472.6 L125.0 473.5 L121.1 473.6 L119.2 472.6Z" fill="#dbe5f6"/><path d="M115.3 471.3 L117.3 469.9 L119.7 470.5 L118.2 471.7 L116.3 471.8Z" fill="#dbe5f6"/><path d="M132.2 468.4 L137.1 468.6 L138.5 467.5 L140.9 466.8 L144.3 465.5 L145.8 464.6 L141.9 464.2 L136.1 464.4 L132.2 465.2 L133.7 466.2 L133.2 467.1Z" fill="#dbe5f6"/><path d="M129.3 469.1 L131.7 469.7 L137.1 469.7 L137.1 469.0 L132.7 468.5 L129.3 468.4Z" fill="#dbe5f6"/><path d="M119.2 469.3 L122.1 469.7 L125.0 469.4 L124.5 468.8 L122.6 468.5 L119.7 468.5Z" fill="#dbe5f6"/><path d="M129.8 467.1 L132.2 467.3 L133.7 466.5 L131.7 465.5 L129.8 466.2Z" fill="#dbe5f6"/><path d="M126.4 471.3 L128.8 471.7 L130.8 471.0 L130.3 470.0 L127.4 470.2Z" fill="#dbe5f6"/><path d="M133.7 476.5 L135.6 477.5 L136.8 476.7 L135.1 475.3Z" fill="#dbe5f6"/><path d="M140.4 467.3 L143.3 468.8 L146.7 468.8 L149.4 472.3 L151.1 474.6 L149.9 475.8 L151.5 477.5 L154.0 479.1 L155.2 478.4 L156.4 476.2 L159.8 474.2 L163.1 473.6 L165.1 472.3 L165.6 470.4 L167.0 468.8 L166.5 467.1 L167.5 466.2 L169.9 465.2 L165.1 464.8 L160.2 463.9 L153.5 464.4 L146.7 464.9 L143.8 465.7 L142.9 466.5Z" fill="#e8eef9"/><path d="M116.3 486.1 L129.8 486.1 L132.2 486.8 L133.0 486.7 L134.7 487.8 L135.6 488.2 L135.9 490.7 L137.5 490.1 L137.5 489.7 L138.8 489.4 L139.6 488.7 L141.5 488.5 L142.3 487.2 L143.0 487.4 L143.2 488.6 L143.3 488.9 L141.9 489.7 L141.6 490.8 L140.0 491.6 L139.2 492.9 L139.0 493.9 L139.1 495.0 L138.0 495.9 L136.7 497.1 L136.4 498.1 L137.1 500.4 L136.8 501.5 L136.2 501.0 L135.7 499.7 L135.8 498.6 L135.1 498.4 L134.4 498.6 L133.2 498.2 L132.5 498.9 L131.7 498.8 L130.3 498.6 L128.8 499.8 L128.7 501.0 L127.8 500.6 L126.9 498.7 L126.0 499.0 L125.1 498.1 L124.3 497.2 L123.4 497.5 L122.1 497.5 L120.3 496.8 L119.1 496.8 L118.5 495.8 L117.5 495.4 L116.8 494.0 L115.9 492.3 L115.7 490.7 L115.8 487.9 L115.5 486.6Z" fill="#c9d8f1"/><path d="M119.1 496.8 L120.3 496.8 L122.1 497.5 L123.4 497.5 L124.3 497.2 L125.1 498.1 L126.0 499.0 L126.9 498.7 L127.8 500.6 L128.7 501.0 L128.5 503.2 L129.1 505.1 L130.1 506.0 L131.5 505.8 L132.0 504.2 L133.7 503.9 L133.3 506.0 L132.6 506.2 L131.7 506.6 L131.2 508.3 L130.1 507.3 L128.8 507.5 L127.4 506.8 L125.7 505.9 L124.7 504.8 L124.7 503.2 L123.5 501.6 L122.8 500.3 L121.4 498.7 L120.4 497.4 L120.4 498.4 L121.6 500.3 L122.6 502.2 L122.8 502.9 L121.6 501.6 L120.6 500.0 L119.9 498.4Z" fill="#e8eef9"/><path d="M131.2 508.3 L131.7 506.6 L132.6 506.2 L133.1 507.4 L135.1 507.5 L135.5 508.0 L135.3 510.6 L135.9 511.8 L137.1 511.8 L137.8 511.6 L138.4 512.2 L138.1 513.0 L136.8 513.0 L136.3 512.5 L135.6 512.4 L134.4 511.3 L134.2 510.4 L133.4 509.3 L132.2 508.9Z" fill="#e8eef9"/><path d="M134.6 503.7 L135.9 502.9 L137.3 503.0 L139.2 504.4 L139.9 504.7 L138.3 504.9 L138.0 504.4 L136.3 503.5Z" fill="#e8eef9"/><path d="M139.8 505.7 L140.4 504.9 L141.9 504.9 L142.7 505.7 L141.4 506.1Z" fill="#e8eef9"/><path d="M138.4 512.2 L139.2 510.7 L140.9 510.0 L141.2 510.7 L141.9 510.0 L142.9 510.9 L144.8 510.9 L145.8 510.8 L146.7 512.2 L148.2 513.8 L149.6 514.0 L150.8 514.8 L151.5 516.7 L151.5 517.7 L152.5 518.3 L154.2 519.3 L155.9 519.6 L157.6 520.8 L158.8 521.6 L158.8 523.5 L157.6 525.4 L156.9 527.0 L156.9 529.3 L155.9 531.9 L154.2 532.6 L152.3 534.4 L152.2 536.1 L150.6 538.6 L149.6 540.1 L148.2 539.9 L147.5 539.6 L148.3 541.2 L147.7 542.5 L145.8 542.8 L145.6 544.1 L144.3 544.1 L144.8 545.3 L144.1 546.7 L143.1 547.6 L143.9 548.6 L142.4 550.5 L142.6 551.5 L141.4 552.5 L139.7 551.2 L139.2 548.6 L140.2 546.0 L140.1 543.5 L140.2 541.5 L141.2 539.0 L141.2 536.4 L141.7 533.2 L141.7 529.6 L140.7 528.6 L138.9 526.7 L138.0 524.1 L137.2 522.2 L136.5 520.9 L137.1 519.6 L136.7 518.3 L137.1 517.1 L137.6 516.5 L138.4 515.1 L138.3 513.2Z" fill="#e8eef9"/><path d="M171.1 493.9 L171.4 492.7 L171.4 490.0 L174.8 489.8 L175.1 488.1 L173.5 486.5 L175.0 486.3 L175.8 485.8 L176.6 484.9 L177.6 484.3 L178.1 483.4 L179.8 483.2 L179.9 482.0 L179.7 481.0 L180.8 480.5 L180.8 482.0 L181.7 482.7 L182.6 482.9 L184.6 482.5 L185.3 482.6 L185.8 482.1 L185.9 481.0 L186.6 480.5 L187.4 480.8 L187.5 480.2 L187.1 479.6 L189.2 479.4 L189.0 480.7 L189.3 481.5 L190.6 482.4 L191.4 483.4 L190.9 484.1 L192.2 484.3 L193.1 485.3 L195.0 485.8 L195.0 486.9 L194.2 487.3 L192.6 487.9 L193.3 488.5 L191.9 489.0 L191.4 488.4 L191.9 488.1 L190.6 487.7 L190.0 488.5 L189.5 489.5 L189.2 490.7 L189.7 491.2 L188.4 491.4 L187.3 491.4 L187.1 492.1 L187.3 493.1 L186.8 494.2 L186.1 493.9 L185.4 492.1 L185.1 490.8 L183.4 489.7 L182.4 488.3 L181.7 488.5 L181.8 489.4 L183.4 490.8 L184.6 491.8 L183.9 491.6 L183.7 492.7 L183.3 493.2 L183.3 491.9 L181.7 490.9 L180.7 489.8 L180.0 489.1 L179.3 489.5 L177.2 489.9 L177.2 490.8 L175.9 491.6 L175.6 492.7 L174.7 494.0 L173.1 494.5 L172.6 493.9Z" fill="#e8eef9"/><path d="M178.1 480.0 L179.1 480.3 L179.8 480.0 L180.9 479.5 L181.2 480.0 L181.9 481.6 L182.6 482.0 L183.7 481.3 L183.8 480.0 L184.9 479.1 L184.1 478.4 L184.2 477.5 L186.1 476.2 L186.6 475.3 L187.9 475.7 L187.8 476.5 L186.1 477.5 L186.1 478.5 L186.8 479.1 L189.1 478.7 L190.9 477.3 L190.1 476.2 L190.2 474.9 L189.7 473.3 L190.7 472.8 L189.2 472.0 L186.8 472.1 L184.4 472.9 L182.7 473.9 L181.7 475.5 L180.5 476.8 L178.2 477.8Z" fill="#e8eef9"/><path d="M173.0 485.4 L174.0 485.2 L176.3 484.7 L176.5 483.7 L175.8 483.4 L175.0 482.3 L174.7 481.6 L174.8 480.6 L173.8 480.5 L174.2 480.0 L173.2 480.0 L172.8 481.0 L173.3 482.0 L174.2 482.4 L174.3 483.3 L173.5 483.4 L173.7 484.1 L173.2 484.4 L174.2 484.6Z" fill="#d4e0f5"/><path d="M170.9 484.3 L172.7 484.1 L172.8 482.9 L173.0 482.4 L172.1 482.1 L170.9 482.8 L171.3 483.4Z" fill="#e8eef9"/><path d="M164.1 475.5 L165.1 474.9 L167.0 475.1 L168.6 475.1 L169.1 475.8 L168.2 476.4 L166.5 476.9 L164.8 476.5 L165.1 476.0Z" fill="#e8eef9"/><path d="M181.0 466.5 L183.4 466.2 L186.3 466.0 L188.7 466.2 L186.3 467.1 L184.4 468.1 L182.5 467.8Z" fill="#e8eef9"/><path d="M190.7 472.8 L191.6 473.0 L195.5 474.0 L195.5 475.0 L194.3 475.1 L192.5 474.9 L191.6 474.8 L192.4 475.8 L193.8 476.6 L195.3 476.2 L195.0 475.3 L197.0 475.0 L197.1 473.7 L198.2 473.9 L198.2 474.7 L201.8 473.7 L204.7 473.4 L206.9 473.1 L208.8 473.7 L208.1 472.0 L209.0 470.8 L210.9 470.8 L210.5 472.6 L211.2 473.6 L211.7 471.5 L213.4 471.2 L214.8 471.5 L214.8 470.4 L217.7 470.0 L217.7 469.4 L223.0 468.6 L226.1 467.7 L230.3 468.8 L230.5 470.3 L233.2 470.7 L236.6 470.4 L238.0 472.0 L239.9 471.7 L243.1 471.7 L243.3 471.0 L248.1 471.7 L249.6 472.1 L253.0 472.6 L253.4 472.9 L258.1 472.7 L258.3 473.4 L261.7 473.1 L262.6 473.3 L262.6 475.8 L261.7 476.3 L261.2 477.5 L258.1 479.1 L254.9 479.1 L254.4 480.3 L253.9 481.3 L253.9 482.4 L253.0 483.6 L251.4 484.9 L250.9 482.9 L250.8 481.1 L252.0 480.2 L253.0 478.7 L251.4 478.0 L250.2 479.6 L247.2 479.4 L244.8 479.5 L243.3 480.7 L241.0 482.5 L242.1 482.9 L243.5 483.6 L244.0 484.1 L243.6 485.4 L243.4 486.6 L242.5 487.8 L241.1 489.4 L239.9 490.2 L238.8 490.5 L239.0 488.8 L239.9 488.7 L240.9 486.5 L239.7 487.0 L238.8 486.1 L237.3 485.6 L236.6 483.7 L235.4 483.2 L234.0 483.4 L233.7 483.8 L233.2 485.5 L232.1 485.6 L231.5 486.7 L229.8 485.8 L228.1 486.0 L226.4 485.2 L225.0 484.6 L223.2 485.2 L222.9 485.6 L220.1 485.0 L218.1 486.0 L216.9 485.8 L215.8 484.9 L214.3 485.0 L212.9 482.9 L211.2 482.9 L210.1 482.8 L209.0 482.0 L205.2 482.9 L205.4 484.9 L204.4 485.1 L202.3 484.9 L200.2 484.4 L199.1 485.5 L198.4 486.5 L199.4 487.8 L198.6 488.3 L198.6 490.0 L199.1 490.7 L198.2 490.7 L197.2 490.2 L195.0 489.7 L193.6 488.7 L194.2 487.3 L195.0 486.9 L195.0 485.8 L193.1 485.3 L192.2 484.3 L190.9 484.1 L191.4 483.4 L190.6 482.4 L189.3 481.5 L189.0 480.7 L189.2 479.4 L189.1 478.7 L190.9 477.3 L190.1 476.2 L190.2 474.9 L189.7 473.3Z" fill="#d6e2f5"/><path d="M200.6 471.7 L202.5 472.2 L203.5 472.1 L203.0 470.7 L204.7 469.4 L208.5 468.4 L207.6 468.1 L203.7 468.8 L201.8 470.4Z" fill="#d6e2f5"/><path d="M244.3 482.9 L244.8 484.2 L244.9 485.8 L244.8 487.8 L244.3 488.1 L244.3 485.5Z" fill="#d6e2f5"/><path d="M241.9 469.1 L245.3 469.4 L248.1 469.3 L246.2 468.8 L243.3 468.8Z" fill="#d6e2f5"/><path d="M221.6 466.8 L224.0 467.3 L226.4 467.1 L224.0 465.9 L221.6 465.5Z" fill="#d6e2f5"/><path d="M218.1 486.0 L220.1 485.0 L222.9 485.6 L223.2 485.2 L225.0 484.6 L226.4 485.2 L228.1 486.0 L229.8 485.8 L231.5 486.7 L233.6 487.6 L232.0 487.8 L230.8 488.7 L229.7 488.7 L229.8 489.5 L228.8 490.2 L226.4 490.9 L224.5 490.3 L222.3 490.1 L221.8 489.2 L219.7 488.6 L219.2 486.9Z" fill="#e8eef9"/><path d="M198.4 486.5 L199.1 485.5 L200.2 484.4 L202.3 484.9 L204.4 485.1 L205.4 484.9 L205.2 482.9 L209.0 482.0 L210.1 482.8 L211.2 482.9 L212.9 482.9 L214.3 485.0 L215.8 484.9 L216.9 485.8 L218.1 486.0 L217.1 487.2 L215.8 487.3 L215.5 488.5 L214.5 488.8 L214.5 490.5 L213.6 491.0 L211.9 491.6 L211.2 492.3 L211.9 493.9 L210.2 494.0 L208.5 493.7 L207.8 493.6 L206.9 494.4 L205.3 494.8 L205.2 494.1 L203.7 493.4 L201.8 493.6 L201.7 492.6 L201.2 490.8 L202.0 490.7 L201.1 490.2 L199.9 489.0 L200.3 487.6 L199.4 487.8Z" fill="#e8eef9"/><path d="M188.4 491.4 L189.7 491.2 L191.2 490.7 L192.6 490.7 L194.1 491.3 L195.7 491.0 L196.7 491.2 L197.3 492.1 L197.1 493.7 L196.1 493.7 L194.1 494.0 L193.1 494.0 L193.1 494.5 L191.4 494.5 L190.4 494.2 L189.2 494.1 L188.4 492.9Z" fill="#e8eef9"/><path d="M195.0 489.7 L197.2 490.2 L198.2 490.7 L199.1 490.7 L199.8 491.7 L199.3 493.0 L197.9 492.6 L197.3 492.1 L196.7 491.2 L195.7 491.0Z" fill="#e8eef9"/><path d="M193.1 494.0 L194.1 494.0 L196.1 493.7 L197.1 493.7 L197.9 495.0 L197.7 495.9 L198.8 497.9 L199.1 498.4 L198.9 498.7 L199.8 500.5 L200.5 501.0 L200.6 501.9 L201.8 502.1 L202.9 500.8 L203.0 501.9 L204.6 503.2 L203.6 505.5 L202.3 506.8 L200.8 507.7 L199.1 508.7 L197.4 509.5 L196.6 509.5 L196.3 507.1 L194.5 503.9 L193.6 501.3 L192.6 499.7 L192.6 498.7 L192.3 497.5 L192.8 495.9 L193.1 494.5Z" fill="#e8eef9"/><path d="M197.3 492.1 L197.9 492.6 L199.3 493.0 L199.8 493.6 L201.8 493.6 L203.7 493.4 L205.2 494.1 L205.3 494.8 L205.0 496.0 L205.5 497.5 L205.2 498.5 L206.3 500.3 L205.5 501.5 L203.4 501.2 L203.0 500.3 L202.0 500.6 L200.6 499.7 L199.8 498.3 L199.1 498.4 L198.8 497.9 L197.7 495.9 L197.9 495.0 L197.1 493.7Z" fill="#e8eef9"/><path d="M205.3 494.8 L206.9 494.4 L207.8 493.6 L208.5 493.7 L210.2 494.0 L211.9 493.9 L212.9 494.8 L211.7 496.4 L212.1 497.0 L211.4 498.1 L210.0 499.8 L209.5 500.6 L210.0 502.0 L208.6 502.4 L208.1 501.7 L207.8 501.3 L205.5 501.5 L206.3 500.3 L205.2 498.5 L205.5 497.5 L205.0 496.0Z" fill="#e8eef9"/><path d="M212.9 494.8 L213.8 496.3 L213.9 497.6 L214.9 498.3 L216.0 498.9 L217.2 499.7 L218.6 499.7 L218.7 500.1 L219.9 499.8 L220.1 499.8 L221.3 498.9 L222.1 498.8 L222.7 499.5 L222.6 500.2 L221.6 501.0 L221.3 502.2 L220.8 502.2 L220.6 503.5 L220.3 504.3 L220.1 503.0 L219.4 503.2 L218.7 503.7 L217.7 503.9 L217.5 504.8 L216.8 505.1 L215.5 506.9 L214.4 507.7 L214.4 509.3 L214.2 511.1 L213.4 512.4 L213.0 512.4 L212.5 511.3 L211.8 509.3 L211.2 507.4 L210.9 505.5 L210.9 504.2 L209.9 504.3 L209.0 503.3 L208.6 502.4 L210.0 502.0 L209.5 500.6 L210.0 499.8 L211.4 498.1 L212.1 497.0 L211.7 496.4Z" fill="#d3dff4"/><path d="M214.2 511.6 L214.9 512.2 L215.2 513.2 L214.6 513.8 L214.2 513.2Z" fill="#e8eef9"/><path d="M222.7 499.5 L223.4 500.0 L222.8 502.2 L223.4 502.2 L223.5 503.4 L224.1 503.9 L224.7 504.0 L225.4 503.2 L226.6 502.7 L227.2 503.0 L227.9 503.8 L227.2 504.7 L226.8 505.5 L227.4 506.8 L228.3 507.7 L228.5 509.3 L228.3 510.3 L227.4 511.0 L226.5 512.1 L226.3 511.1 L225.4 510.6 L225.2 509.8 L224.4 509.1 L224.0 509.1 L223.7 510.6 L223.6 511.7 L224.1 512.4 L224.5 513.3 L225.1 513.7 L225.6 514.8 L225.7 515.9 L226.0 516.8 L225.6 516.9 L224.6 515.9 L224.2 514.5 L224.1 513.5 L223.2 512.5 L223.3 511.3 L223.3 510.0 L222.9 508.0 L222.8 507.1 L221.8 507.5 L221.2 507.4 L221.3 506.1 L220.9 504.9 L220.3 504.3 L220.6 503.5 L220.8 502.2 L221.3 502.2 L221.6 501.0 L222.6 500.2Z" fill="#e8eef9"/><path d="M235.7 491.9 L236.9 490.8 L237.5 490.7 L238.8 490.5 L238.3 491.4 L237.3 492.1 L237.7 492.8 L238.2 493.9 L238.2 494.8 L237.3 495.4 L236.8 495.5 L236.8 494.0 L236.6 493.4 L236.0 493.2 L236.2 492.3Z" fill="#e8eef9"/><path d="M238.5 496.1 L239.0 495.8 L239.7 494.9 L241.4 494.7 L241.9 493.7 L242.7 493.4 L243.3 491.9 L243.4 491.0 L244.0 491.1 L244.3 492.3 L243.8 493.2 L243.7 494.7 L243.2 495.2 L242.6 495.4 L241.8 495.5 L241.3 496.1 L240.9 495.5 L239.9 495.7 L239.5 495.9 L239.5 496.6 L239.0 497.5 L238.6 497.5Z" fill="#dfe8f7"/><path d="M243.3 490.8 L243.5 489.9 L244.1 488.5 L245.9 489.8 L244.9 490.7 L244.0 490.3Z" fill="#dfe8f7"/><path d="M233.9 505.8 L234.7 505.9 L234.6 507.4 L235.6 509.3 L234.9 508.9 L233.9 508.4 L233.7 507.4Z" fill="#e8eef9"/><path d="M234.6 513.2 L235.4 512.2 L236.3 511.4 L236.8 512.9 L236.3 514.0 L235.6 513.5Z" fill="#e8eef9"/><path d="M234.6 510.9 L235.1 510.3 L236.3 509.8 L236.2 511.1 L235.4 511.6Z" fill="#e8eef9"/><path d="M221.7 514.1 L222.8 514.4 L224.1 516.1 L225.7 517.7 L226.9 519.6 L226.8 521.4 L226.2 521.4 L225.0 520.3 L224.1 518.7 L223.3 516.7 L222.1 515.3Z" fill="#e8eef9"/><path d="M226.6 522.1 L227.3 521.6 L228.2 522.1 L229.3 521.9 L230.3 522.2 L231.0 522.7 L231.0 523.3 L229.3 523.0 L227.9 522.7Z" fill="#e8eef9"/><path d="M228.3 516.7 L229.5 516.1 L230.3 515.6 L231.5 514.5 L232.2 513.2 L233.2 514.4 L232.6 515.8 L232.7 517.1 L232.5 518.3 L231.8 520.1 L231.0 520.3 L229.7 520.0 L228.8 518.7 L228.3 517.7Z" fill="#e8eef9"/><path d="M233.4 517.4 L234.0 516.9 L235.8 516.7 L236.1 517.1 L234.1 517.4 L233.8 518.3 L235.3 518.3 L234.5 519.0 L235.0 520.6 L234.4 520.8 L234.0 519.6 L233.9 521.2 L233.4 521.2 L233.2 519.6Z" fill="#e8eef9"/><path d="M239.0 518.2 L240.4 518.2 L240.9 519.8 L242.4 518.8 L243.8 519.4 L245.5 520.3 L246.7 521.6 L247.1 522.5 L248.4 524.4 L246.7 524.0 L245.3 522.7 L244.8 523.5 L243.8 523.5 L242.6 523.0 L242.4 521.2 L240.4 520.3 L239.8 520.3 L240.4 519.3 L239.5 519.2Z" fill="#e8eef9"/><path d="M231.7 523.2 L233.2 523.1 L235.1 523.0 L236.1 523.2 L237.0 523.2 L235.6 524.3 L233.7 524.1 L231.7 523.5Z" fill="#e8eef9"/><path d="M237.3 516.4 L237.9 516.7 L237.5 518.0 L237.2 517.4Z" fill="#e8eef9"/><path d="M230.5 531.9 L230.9 534.4 L231.2 537.0 L231.2 539.6 L232.7 540.2 L233.7 539.6 L235.4 539.6 L236.6 538.5 L238.0 538.1 L239.2 538.0 L240.4 538.8 L241.1 540.1 L242.3 539.0 L242.6 540.2 L243.3 541.9 L245.0 542.7 L246.5 542.8 L248.1 541.9 L248.8 539.3 L249.6 537.0 L249.7 535.1 L248.6 533.2 L247.8 531.5 L246.4 529.9 L246.0 527.4 L245.0 527.0 L244.5 524.7 L244.1 526.1 L243.8 529.0 L242.8 528.8 L241.1 527.4 L241.8 525.6 L239.9 525.1 L238.7 525.8 L238.2 527.4 L237.3 526.7 L236.1 527.7 L234.8 529.0 L234.1 530.3 L232.2 531.0Z" fill="#e8eef9"/><path d="M259.1 539.9 L260.0 541.2 L260.7 541.9 L261.8 542.0 L261.2 543.1 L260.2 544.4 L260.1 542.8 L259.3 540.9Z" fill="#e8eef9"/><path d="M167.5 504.2 L168.0 502.2 L168.7 500.8 L169.4 499.8 L170.9 498.7 L171.0 497.4 L172.4 495.8 L172.9 494.6 L174.7 495.0 L176.2 494.2 L178.1 494.0 L180.3 493.7 L181.0 493.9 L180.6 495.6 L181.1 496.3 L183.0 496.9 L184.9 498.2 L185.4 497.1 L186.8 496.7 L187.8 497.3 L189.7 497.8 L190.7 497.4 L191.3 497.6 L192.3 497.5 L192.6 498.7 L191.9 499.7 L192.8 502.2 L193.7 504.2 L193.7 505.6 L194.8 507.7 L196.5 509.7 L196.6 510.3 L197.2 510.9 L198.4 510.5 L200.4 510.1 L200.2 511.6 L198.9 514.8 L197.0 517.1 L195.7 518.9 L195.0 520.3 L194.5 521.9 L194.8 524.1 L195.3 525.8 L195.3 527.4 L193.6 529.2 L192.6 530.6 L192.8 533.2 L191.6 534.1 L191.5 535.7 L190.4 537.5 L189.0 539.3 L187.3 539.6 L185.4 540.1 L184.5 539.6 L184.5 538.3 L183.7 536.1 L182.9 534.4 L182.7 532.2 L181.5 529.3 L181.4 527.7 L182.3 525.8 L182.1 523.5 L181.6 521.6 L181.4 520.6 L180.0 518.3 L180.3 517.1 L180.4 515.6 L180.0 514.8 L178.6 514.9 L177.8 513.6 L176.3 513.8 L174.7 514.5 L173.5 514.4 L172.1 514.9 L171.3 514.2 L170.1 513.2 L169.3 511.9 L168.5 510.6 L167.6 509.7 L167.2 508.2 L167.7 507.1 L167.9 505.5Z" fill="#e8eef9"/><path d="M199.5 525.4 L200.1 527.7 L199.6 529.0 L198.8 532.5 L198.4 533.8 L197.4 534.1 L196.8 532.8 L197.2 530.6 L197.0 528.6 L197.9 527.9 L198.9 526.7Z" fill="#e8eef9"/><path d="M181.7 493.2 L183.2 493.1 L183.0 494.1 L181.7 493.5Z" fill="#e8eef9"/><path d="M179.7 491.3 L180.4 491.3 L180.3 492.5 L179.8 492.6Z" fill="#e8eef9"/><path d="M191.3 495.2 L192.4 494.8 L192.1 495.4 L191.4 495.4Z" fill="#e8eef9"/><path d="M143.9 531.9 L145.5 532.0 L147.7 533.8 L147.9 535.3 L149.6 534.2 L149.7 535.2 L147.9 537.1 L147.5 539.6 L148.3 541.2 L147.7 542.5 L145.8 542.8 L145.6 544.1 L144.3 544.1 L144.8 545.3 L144.1 546.7 L143.1 547.6 L143.9 548.6 L142.4 550.5 L142.6 551.4 L140.9 551.2 L140.4 549.9 L141.2 547.3 L141.0 544.7 L141.4 542.2 L141.9 539.0 L142.1 535.7 L142.7 533.5 L143.3 532.5Z" fill="#d4e0f5"/><path d="M174.8 489.8 L175.1 488.1 L173.5 486.5 L175.0 486.3 L175.8 485.8 L176.6 484.9 L177.6 484.3 L178.1 483.4 L179.8 483.2 L179.9 482.0 L179.7 481.0 L180.8 480.5 L180.8 482.0 L181.7 482.7 L182.6 482.9 L182.8 484.9 L181.6 485.3 L182.4 486.3 L182.0 487.1 L180.5 487.2 L179.4 487.0 L178.6 487.9 L179.1 488.2 L179.3 489.5 L177.2 489.9 L177.2 490.4Z" fill="#dbe5f6"/><path d="M211.2 492.3 L211.9 491.6 L213.6 491.0 L214.5 490.5 L214.5 488.8 L215.5 488.5 L215.8 487.3 L217.1 487.2 L218.1 486.0 L219.2 486.9 L219.7 488.6 L221.8 489.2 L222.3 490.1 L224.5 490.3 L226.4 490.9 L228.8 490.2 L229.8 489.5 L229.7 488.7 L230.8 488.7 L232.0 487.8 L233.6 487.6 L231.5 486.7 L232.1 485.6 L233.2 485.5 L233.7 483.8 L234.0 483.4 L235.4 483.2 L236.6 483.7 L237.3 485.6 L238.8 486.1 L239.7 487.0 L240.9 486.5 L239.9 488.7 L239.0 488.8 L238.8 490.5 L237.5 490.7 L236.9 490.8 L235.7 491.9 L234.5 492.6 L234.2 491.4 L233.2 492.5 L232.5 492.7 L233.2 493.7 L234.9 493.7 L233.9 494.5 L233.3 495.3 L234.0 496.7 L234.5 497.7 L234.5 498.8 L233.9 500.2 L233.2 501.5 L232.2 502.6 L230.8 503.3 L229.3 503.9 L228.8 504.6 L228.6 503.9 L227.9 503.8 L227.2 503.0 L226.6 502.7 L225.4 503.2 L224.7 504.0 L224.1 503.9 L223.5 503.4 L223.4 502.2 L222.8 502.2 L223.4 500.0 L222.8 499.5 L222.1 498.8 L221.3 498.9 L220.1 499.8 L219.9 499.8 L218.7 500.1 L218.6 499.7 L217.2 499.7 L216.0 498.9 L214.9 498.3 L213.9 497.6 L213.8 496.3 L213.4 494.8 L212.4 494.6 L211.9 493.9Z" fill="#3e76cb"/><path d="M228.2 505.3 L229.1 504.8 L229.3 505.1 L228.8 505.9 L228.2 505.8Z" fill="#3e76cb"/><path d="M233.8 502.9 L234.1 501.6 L234.6 501.6 L234.1 503.5Z" fill="#3e76cb"/><path d="M236.6 493.4 L237.7 492.8 L238.2 493.9 L238.2 494.8 L237.3 495.4 L236.8 495.5 L236.8 494.0Z" fill="#4a80d2"/></g><g fill="none" stroke="#ccd1d9" stroke-width="0.3" stroke-linejoin="round"><path d="M171.5 499.9 L171.5 501.6 L169.9 502.6 L169.4 504.0 L167.5 504.2"/><path d="M171.5 499.9 L173.4 501.6 L176.3 504.2 L177.3 505.5 L177.7 506.9 L177.7 505.3 L181.5 502.6 L182.6 503.1 L182.9 502.9 L187.3 505.1 L187.3 504.8 L187.8 504.8 L187.8 497.3"/><path d="M187.8 503.5 L193.5 503.5"/><path d="M187.3 505.1 L187.3 507.6 L186.6 508.7 L186.6 510.6 L187.3 512.1 L188.9 514.5 L190.7 515.4 L192.1 515.0 L193.0 514.7 L195.5 515.1 L196.0 515.0 L197.4 514.5 L198.9 512.5 L197.0 511.9 L196.5 510.6 L196.2 509.7"/><path d="M193.3 508.5 L194.1 508.3 L196.2 509.7"/><path d="M192.1 515.0 L192.1 518.3 L193.9 519.7 L194.6 520.7"/><path d="M192.1 518.3 L190.4 518.3 L190.0 518.6 L189.8 520.6 L190.5 523.0 L191.6 523.8 L192.4 525.2 L195.3 524.5"/><path d="M181.6 521.6 L183.7 521.5 L186.3 524.8 L187.3 524.8 L187.3 526.1 L186.3 526.1 L186.3 529.0 L187.9 529.2 L188.7 529.3 L190.4 527.7 L191.6 526.7 L191.6 523.8"/><path d="M181.4 528.8 L182.5 528.9 L184.6 528.9 L187.0 529.0 L187.9 529.2"/><path d="M185.4 536.0 L185.4 531.9 L185.8 531.9 L185.8 529.5"/><path d="M183.7 536.1 L185.4 536.0 L186.6 534.6 L188.0 534.2 L189.9 532.0 L190.8 532.1 L191.2 535.0"/><path d="M189.9 532.0 L188.7 529.3"/><path d="M190.8 532.1 L191.5 530.3 L191.6 528.5 L190.4 527.7"/><path d="M180.4 515.6 L181.2 516.3 L182.1 516.3 L183.5 516.6 L184.7 515.4 L184.7 514.5 L186.5 515.1 L188.9 514.5"/><path d="M180.0 514.8 L180.4 513.2 L182.1 511.6 L182.6 509.7 L182.3 508.9 L183.2 506.8 L182.9 502.9"/><path d="M182.6 509.7 L183.2 511.3 L183.2 512.9 L184.7 514.5"/><path d="M177.0 513.6 L177.4 510.2 L177.7 509.0 L177.7 506.9"/><path d="M182.3 508.9 L179.1 509.3 L177.7 509.0"/><path d="M176.3 513.8 L176.1 510.7 L175.7 510.6 L174.3 510.6 L174.3 514.4"/><path d="M174.3 510.6 L173.0 511.0 L171.7 510.9 L171.6 512.8 L172.1 514.9"/><path d="M173.0 511.0 L173.1 510.1 L173.7 509.8 L173.8 509.1 L175.5 508.0 L177.3 507.8 L177.7 506.9"/><path d="M169.8 508.2 L170.2 509.7 L171.7 510.9"/><path d="M167.7 507.1 L168.8 507.0 L169.8 508.2 L170.1 507.7 L173.0 507.7 L173.0 507.1 L172.6 501.6 L173.4 501.6"/><path d="M174.7 495.0 L175.1 496.8 L174.0 497.5 L171.5 499.2 L171.5 499.9"/><path d="M179.9 493.9 L179.7 496.4 L180.3 498.3 L180.5 501.9 L181.5 502.6"/><path d="M180.3 498.3 L181.3 496.4"/><path d="M140.9 510.0 L140.7 511.9 L141.9 513.2 L143.1 513.7 L143.3 516.9 L141.9 517.4 L141.9 520.4 L140.4 520.6 L139.3 517.8 L137.6 516.5"/><path d="M146.7 512.2 L146.2 514.4 L144.8 515.1 L144.5 516.4 L143.3 516.9"/><path d="M146.7 514.4 L147.7 516.7 L148.4 516.4 L149.4 516.2 L150.6 515.1 L150.8 514.8"/><path d="M148.2 513.8 L147.7 516.7"/><path d="M149.6 514.0 L149.4 516.2"/><path d="M141.9 520.4 L140.4 522.4 L141.6 523.8 L141.6 524.8 L142.1 524.8 L142.5 525.8 L142.4 528.1 L142.1 529.0 L141.7 529.6"/><path d="M142.1 524.8 L144.2 524.0 L144.2 525.4 L146.5 526.6 L146.7 528.2 L147.5 528.2 L147.7 530.5 L145.6 530.9 L145.5 532.0"/><path d="M147.7 530.5 L147.8 531.9 L148.7 532.1 L149.5 533.2 L149.3 534.2"/><path d="M142.1 529.0 L142.9 530.3 L142.6 532.4 L143.3 532.5"/><path d="M147.9 537.1 L148.7 537.5 L149.9 539.4"/><path d="M136.5 520.9 L137.3 520.6 L137.8 519.9 L139.3 517.8"/><path d="M171.4 490.7 L172.3 490.7 L172.7 491.0 L172.3 492.1 L172.1 493.7"/><path d="M185.8 482.1 L186.7 482.7 L187.1 483.9 L187.3 485.0 L186.6 486.1 L184.9 485.8 L183.9 486.7 L183.6 487.6 L182.4 487.8 L182.4 488.3"/><path d="M186.6 486.1 L188.5 486.6 L189.3 488.4 L190.0 488.5"/><path d="M186.4 486.8 L185.8 487.9 L186.7 489.0 L186.5 490.5 L188.4 490.8 L189.2 490.7"/><path d="M186.7 489.0 L189.5 489.5"/><path d="M184.9 485.8 L186.4 486.8"/><path d="M182.6 482.9 L182.8 484.9 L184.9 485.8"/><path d="M187.1 483.9 L191.4 483.4"/><path d="M187.3 485.0 L190.4 484.7 L192.2 484.3"/><path d="M189.3 481.5 L188.3 481.8 L186.7 482.7"/><path d="M185.9 481.6 L189.3 481.5"/><path d="M186.6 480.5 L189.0 480.7"/><path d="M181.2 480.0 L181.6 478.1 L182.7 475.2 L185.6 473.3 L188.0 473.3 L189.5 472.9"/><path d="M187.3 475.3 L187.1 473.9 L185.6 473.3"/><path d="M185.1 490.8 L185.6 491.3 L185.8 491.5 L185.4 492.1"/><path d="M183.6 487.6 L184.9 488.4 L185.0 489.2 L185.1 490.8"/><path d="M199.1 498.4 L198.2 499.0 L197.3 498.9 L196.0 497.6 L194.5 497.0 L194.4 496.2 L195.5 495.5 L196.1 493.7"/><path d="M194.5 497.0 L193.6 497.4 L192.6 498.8"/><path d="M194.4 496.2 L193.1 496.6 L192.8 495.9"/><path d="M200.8 505.5 L202.3 504.8 L202.6 503.5 L200.6 501.9"/><path d="M200.8 505.5 L199.1 506.0 L197.4 506.5 L196.6 506.9"/><path d="M200.8 505.5 L201.3 506.9"/><path d="M205.2 494.1 L205.3 494.8"/><path d="M207.8 493.6 L208.4 492.3 L210.0 491.8 L209.8 490.7 L211.2 490.0 L211.4 491.9 L211.2 492.3"/><path d="M201.7 492.6 L202.7 491.1 L204.7 490.7 L205.6 489.7 L207.6 491.3 L208.4 492.3"/><path d="M202.7 491.1 L204.0 488.4 L207.6 491.3"/><path d="M211.2 490.0 L214.5 490.5"/><path d="M210.2 494.0 L210.0 495.8 L209.3 497.4 L207.7 498.5 L205.9 498.8 L205.2 498.5"/><path d="M223.4 502.2 L222.8 502.2"/><path d="M224.1 503.9 L224.0 504.6 L223.1 505.1 L222.7 505.8 L223.4 507.2 L223.3 510.0"/><path d="M224.0 504.6 L225.0 505.1 L224.5 506.4 L226.3 506.4 L226.7 508.4 L227.6 508.2"/><path d="M224.7 504.0 L225.9 504.6 L226.4 505.7 L227.6 508.2 L227.6 509.8 L226.9 510.5 L226.3 511.1"/><path d="M225.2 509.8 L225.3 508.5 L226.7 508.4"/><path d="M224.5 513.3 L224.1 513.5"/></g></svg>
<div style="position:absolute;left:261.20px;top:439.00px;width:114.20px;height:150.00px;background:#fff;border:1px solid #e6e7e8;border-radius:2.4px;overflow:hidden"></div>
<div style="position:absolute;left:262.10px;top:439.90px;width:112.40px;height:28.40px;background:#f9fafb;border-bottom:1px solid #ececec;border-radius:2px 2px 0 0"></div>
<div style="position:absolute;top:449.27px;font-size:7.9px;line-height:11.85px;color:#222;white-space:nowrap;font-weight:bold;left:268.20px;">国家/地区排行</div>
<svg style="position:absolute;left:322.20px;top:450.90px;opacity:1" width="7.00" height="7.00" viewBox="0 0 512 512"><path fill="#505050" fill-rule="evenodd" stroke="#505050" stroke-width="0" stroke-linejoin="round" d="M256 512a256 256 0 1 0 0-512 256 256 0 1 0 0 512m0-336c-17.7 0-32 14.3-32 32 0 13.3-10.7 24-24 24s-24-10.7-24-24c0-44.2 35.8-80 80-80s80 35.8 80 80c0 47.2-36 67.2-56 74.5v3.8c0 13.3-10.7 24-24 24s-24-10.7-24-24v-8.1c0-20.5 14.8-35.2 30.1-40.2 6.4-2.1 13.2-5.5 18.2-10.3 4.3-4.2 7.7-10 7.7-19.6 0-17.7-14.3-32-32-32zm-32 192a32 32 0 1 1 64 0 32 32 0 1 1-64 0"/></svg>
<svg style="position:absolute;left:268.3px;top:473.50px" width="100" height="2.2" viewBox="0 0 100 2.2"><rect width="100" height="2.2" rx="1.1" fill="#e4e4e4"/><rect width="51.4" height="2.2" rx="1.1" fill="#1f7fd0"/></svg>
<div style="position:absolute;top:479.68px;font-size:7.5px;line-height:11.25px;color:#333;white-space:nowrap;left:268.30px;">中国</div>
<div style="position:absolute;top:491.93px;font-size:7.7px;line-height:11.55px;color:#7d7d7d;white-space:nowrap;left:268.30px;">51.39%<span style="font-size:6.3px;color:#8a8a8a;margin-left:4.6px">(100.7MiB)</span></div>
<div style="position:absolute;left:262.10px;top:509.90px;width:112.40px;height:0.80px;background:#ededed"></div>
<svg style="position:absolute;left:268.3px;top:516.80px" width="100" height="2.2" viewBox="0 0 100 2.2"><rect width="100" height="2.2" rx="1.1" fill="#e4e4e4"/><rect width="31.1" height="2.2" rx="1.1" fill="#1f7fd0"/></svg>
<div style="position:absolute;top:522.98px;font-size:7.5px;line-height:11.25px;color:#333;white-space:nowrap;left:268.30px;">韩国</div>
<div style="position:absolute;top:535.23px;font-size:7.7px;line-height:11.55px;color:#7d7d7d;white-space:nowrap;left:268.30px;">31.12%<span style="font-size:6.3px;color:#8a8a8a;margin-left:4.6px">(61MiB)</span></div>
<svg style="position:absolute;left:376.6px;top:443.4px" width="3.4" height="2.2" viewBox="0 0 3.4 2.2"><path d="M0 2.2 L1.7 0 L3.4 2.2 Z" fill="#a8a8a8"/></svg>
<div style="position:absolute;left:376.70px;top:449.20px;width:3.30px;height:35.40px;background:#c1c1c1;border-radius:1.6px"></div>
<div style="position:absolute;top:440.28px;font-size:8.55px;line-height:12.83px;color:#2d85cf;white-space:nowrap;left:401.40px;">24小时流量趋势</div>
<div style="position:absolute;top:440.28px;font-size:8.55px;line-height:12.83px;color:#505050;white-space:nowrap;left:472.60px;">15天流量趋势</div>
<div style="position:absolute;left:401.30px;top:460.20px;width:292.40px;height:0.90px;background:#ececec"></div>
<svg style="position:absolute;left:0;top:0" width="720" height="542" viewBox="0 0 720 542"><path d="M432.2 495.30 H680.7" stroke="#e4eaf3" stroke-width="0.8"/><path d="M432.2 508.90 H680.7" stroke="#e4eaf3" stroke-width="0.8"/><path d="M432.2 522.90 H680.7" stroke="#e4eaf3" stroke-width="0.8"/><path d="M432.2 537.30 H680.7" stroke="#e4eaf3" stroke-width="0.8"/><path d="M437.30 528.90 C437.30 528.90 441.72 536.65 447.70 538.90 C452.07 540.55 455.01 540.45 458.00 536.70 C465.36 527.45 462.62 514.57 468.40 512.90 C472.97 511.57 471.91 525.81 478.70 530.70 C482.26 533.26 483.80 528.54 489.10 527.80 C494.15 527.09 494.25 527.92 499.40 527.80 C504.60 527.67 505.52 529.59 509.80 527.30 C515.87 524.04 514.23 518.46 520.10 516.70 C524.58 515.36 525.14 519.39 530.50 521.10 C535.49 522.69 535.81 521.69 540.80 523.30 C546.16 525.04 546.77 529.21 551.20 527.80 C557.12 525.91 555.87 517.73 561.50 516.70 C566.22 515.83 568.43 518.92 571.90 524.00 C578.78 534.07 576.30 544.98 582.20 547.00 C586.65 548.53 587.42 531.10 592.60 531.10 C597.77 531.10 599.83 551.12 602.90 547.00 C610.18 537.22 605.73 514.56 613.30 503.30 C616.08 499.16 618.75 509.53 623.60 516.20 C629.10 523.78 628.82 531.80 634.00 531.80 C639.17 531.80 638.39 517.97 644.30 516.20 C648.74 514.87 649.37 525.32 654.70 525.60 C659.72 525.87 661.87 514.22 665.00 517.30 C672.22 524.42 675.40 546.00 675.40 546.00 L675.4 600 L437.3 600 Z" fill="#a6d5e8" fill-opacity="0.78"/><path d="M437.30 528.90 C437.30 528.90 441.72 536.65 447.70 538.90 C452.07 540.55 455.01 540.45 458.00 536.70 C465.36 527.45 462.62 514.57 468.40 512.90 C472.97 511.57 471.91 525.81 478.70 530.70 C482.26 533.26 483.80 528.54 489.10 527.80 C494.15 527.09 494.25 527.92 499.40 527.80 C504.60 527.67 505.52 529.59 509.80 527.30 C515.87 524.04 514.23 518.46 520.10 516.70 C524.58 515.36 525.14 519.39 530.50 521.10 C535.49 522.69 535.81 521.69 540.80 523.30 C546.16 525.04 546.77 529.21 551.20 527.80 C557.12 525.91 555.87 517.73 561.50 516.70 C566.22 515.83 568.43 518.92 571.90 524.00 C578.78 534.07 576.30 544.98 582.20 547.00 C586.65 548.53 587.42 531.10 592.60 531.10 C597.77 531.10 599.83 551.12 602.90 547.00 C610.18 537.22 605.73 514.56 613.30 503.30 C616.08 499.16 618.75 509.53 623.60 516.20 C629.10 523.78 628.82 531.80 634.00 531.80 C639.17 531.80 638.39 517.97 644.30 516.20 C648.74 514.87 649.37 525.32 654.70 525.60 C659.72 525.87 661.87 514.22 665.00 517.30 C672.22 524.42 675.40 546.00 675.40 546.00" fill="none" stroke="#7cc3de" stroke-width="0.9"/><circle cx="437.30" cy="528.90" r="1.3" fill="#fff" stroke="#7cc3de" stroke-width="0.8"/><circle cx="447.70" cy="538.90" r="1.3" fill="#fff" stroke="#7cc3de" stroke-width="0.8"/><circle cx="458.00" cy="536.70" r="1.3" fill="#fff" stroke="#7cc3de" stroke-width="0.8"/><circle cx="468.40" cy="512.90" r="1.3" fill="#fff" stroke="#7cc3de" stroke-width="0.8"/><circle cx="478.70" cy="530.70" r="1.3" fill="#fff" stroke="#7cc3de" stroke-width="0.8"/><circle cx="489.10" cy="527.80" r="1.3" fill="#fff" stroke="#7cc3de" stroke-width="0.8"/><circle cx="499.40" cy="527.80" r="1.3" fill="#fff" stroke="#7cc3de" stroke-width="0.8"/><circle cx="509.80" cy="527.30" r="1.3" fill="#fff" stroke="#7cc3de" stroke-width="0.8"/><circle cx="520.10" cy="516.70" r="1.3" fill="#fff" stroke="#7cc3de" stroke-width="0.8"/><circle cx="530.50" cy="521.10" r="1.3" fill="#fff" stroke="#7cc3de" stroke-width="0.8"/><circle cx="540.80" cy="523.30" r="1.3" fill="#fff" stroke="#7cc3de" stroke-width="0.8"/><circle cx="551.20" cy="527.80" r="1.3" fill="#fff" stroke="#7cc3de" stroke-width="0.8"/><circle cx="561.50" cy="516.70" r="1.3" fill="#fff" stroke="#7cc3de" stroke-width="0.8"/><circle cx="571.90" cy="524.00" r="1.3" fill="#fff" stroke="#7cc3de" stroke-width="0.8"/><circle cx="592.60" cy="531.10" r="1.3" fill="#fff" stroke="#7cc3de" stroke-width="0.8"/><circle cx="613.30" cy="503.30" r="1.3" fill="#fff" stroke="#7cc3de" stroke-width="0.8"/><circle cx="623.60" cy="516.20" r="1.3" fill="#fff" stroke="#7cc3de" stroke-width="0.8"/><circle cx="634.00" cy="531.80" r="1.3" fill="#fff" stroke="#7cc3de" stroke-width="0.8"/><circle cx="644.30" cy="516.20" r="1.3" fill="#fff" stroke="#7cc3de" stroke-width="0.8"/><circle cx="654.70" cy="525.60" r="1.3" fill="#fff" stroke="#7cc3de" stroke-width="0.8"/><circle cx="665.00" cy="517.30" r="1.3" fill="#fff" stroke="#7cc3de" stroke-width="0.8"/><text x="427.2" y="497.20" font-size="7.9" fill="#666" text-anchor="end">30M</text><text x="427.2" y="511.15" font-size="7.9" fill="#666" text-anchor="end">25M</text><text x="427.2" y="525.10" font-size="7.9" fill="#666" text-anchor="end">20M</text><text x="427.2" y="539.05" font-size="7.9" fill="#666" text-anchor="end">15M</text><path d="M472.4 476.8 H487.2" stroke="#7fc6e0" stroke-width="1.1"/><circle cx="479.79999999999995" cy="476.8" r="3.0" fill="#fff" stroke="#7fc6e0" stroke-width="1.1"/><path d="M519.6 476.8 H534.4" stroke="#4e9aa6" stroke-width="1.1"/><circle cx="527.0" cy="476.8" r="3.0" fill="#fff" stroke="#4e9aa6" stroke-width="1.1"/><path d="M574.8 476.8 H589.5999999999999" stroke="#f2858c" stroke-width="1.1"/><circle cx="582.1999999999999" cy="476.8" r="3.0" fill="#fff" stroke="#f2858c" stroke-width="1.1"/></svg>
<div style="position:absolute;top:471.68px;font-size:7.5px;line-height:11.25px;color:#3c3c3c;white-space:nowrap;left:490.40px;">总流量</div>
<div style="position:absolute;top:471.68px;font-size:7.5px;line-height:11.25px;color:#3c3c3c;white-space:nowrap;left:538.10px;">缓存流量</div>
<div style="position:absolute;top:471.68px;font-size:7.5px;line-height:11.25px;color:#3c3c3c;white-space:nowrap;left:593.30px;">攻击流量</div>
<div style="position:absolute;left:0.00px;top:45.00px;width:1.00px;height:500.00px;background:rgba(20,22,26,0.42)"></div>
</div></div>
</body></html>
